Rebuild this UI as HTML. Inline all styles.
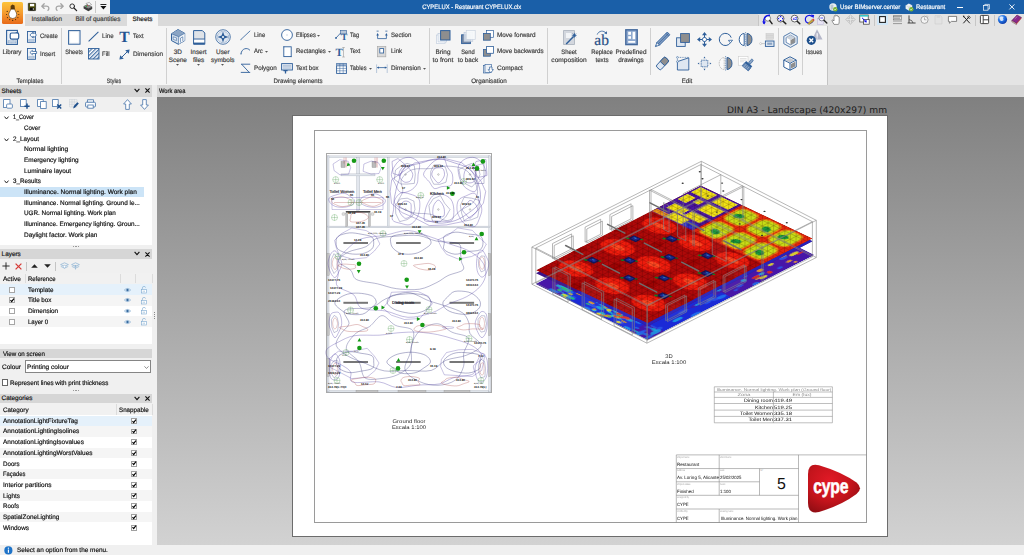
<!DOCTYPE html><html><head><meta charset="utf-8"><title>CYPELUX - Restaurant CYPELUX.clx</title><style>
*{box-sizing:border-box;margin:0;padding:0}
html,body{width:1024px;height:555px;overflow:hidden;background:#f0f0f0}
body{position:relative;font-family:"Liberation Sans",sans-serif;font-size:6.4px;color:#222;line-height:8px;text-rendering:geometricPrecision}
.a{position:absolute;white-space:nowrap}
.t{position:absolute;white-space:nowrap;line-height:8px;height:8px;-webkit-text-stroke:0.18px currentColor}
.c{text-align:center}
.rb{color:#3c3c3c}
.vs{position:absolute;width:1px;background:#cfcfcf}
svg{position:absolute;overflow:visible}
</style></head><body>
<div class="a" style="left:0px;top:0px;width:1024px;height:13.5px;background:#1a5fa8;"></div>
<div class="a" style="left:0px;top:0px;width:110px;height:13.5px;background:#f5f5f5;"></div>
<div class="a" style="left:0px;top:13.5px;width:1024px;height:12.5px;background:#dadada;"></div>
<div class="a" style="left:0px;top:13.5px;width:25px;height:12.5px;background:#f5f5f5;"></div>
<div class="a" style="left:758px;top:13.5px;width:266px;height:12.5px;background:#e4e4e4;"></div>
<div class="a" style="left:0px;top:26px;width:1024px;height:59px;background:#e4e4e4;"></div>
<div class="a" style="left:0px;top:26px;width:826.5px;height:58.5px;background:#f5f5f5;"></div>
<div class="a" style="left:826.5px;top:26px;width:0.8px;height:58.5px;background:#c4c4c4;"></div>
<div class="a" style="left:0px;top:85px;width:1024px;height:11.5px;background:#d6d6d6;"></div>
<div class="a" style="left:152px;top:85px;width:5px;height:11.5px;background:#ececec;"></div>
<div class="a" style="left:0px;top:96.5px;width:157px;height:449px;background:#f0f0f0;"></div>
<div class="a" style="left:157px;top:96.5px;width:867px;height:448.5px;background:linear-gradient(#808080,#d2d2d2);"></div>
<div class="a" style="left:0px;top:545px;width:1024px;height:10px;background:#f0f0f0;"></div>
<div class="a" style="left:1.6px;top:1.9px;width:21.5px;height:21.8px;border-radius:1.6px;background:linear-gradient(#fdc43c,#f6a030 45%,#e86a1a)"></div>
<svg style="left:1.6px;top:1.9px" width="21.5" height="21.8" viewBox="0 0 21.5 21.8">
<g fill="#3a2408"><circle cx="5.2" cy="9.4" r="0.55"/><circle cx="4.6" cy="12.5" r="0.55"/><circle cx="5.4" cy="15.6" r="0.55"/><circle cx="7.7" cy="17.6" r="0.55"/><circle cx="10.7" cy="18.4" r="0.55"/><circle cx="13.6" cy="17.6" r="0.55"/><circle cx="15.9" cy="15.6" r="0.55"/><circle cx="16.8" cy="12.5" r="0.55"/><circle cx="16" cy="9.4" r="0.55"/></g>
<path d="M8.6 7.4 L8.6 4 L10.4 2.4 L12.6 3.4 L12.9 7.4Z" fill="#5a3a0c"/>
<path d="M8.8 7.2 L12.7 7.2 C12.9 9 14.7 10 14.7 12.6 A3.95 3.95 0 0 1 6.8 12.6 C6.8 10 8.6 9 8.8 7.2Z" fill="#fff" stroke="#3a2408" stroke-width="0.55"/>
</svg>
<svg style="left:27.5px;top:3px" width="8" height="8" viewBox="0 0 8 8"><rect x="0.3" y="0.3" width="7.3" height="7.3" rx="0.4" fill="#55550a" stroke="#111" stroke-width="0.6"/><rect x="2" y="0.9" width="4.2" height="2.4" fill="#fff"/><rect x="1.8" y="4.6" width="4.6" height="2.8" fill="#0a0a0a"/><rect x="4.8" y="5.2" width="1" height="1.6" fill="#ddd"/></svg>
<svg style="left:41px;top:3px" width="10" height="8" viewBox="0 0 10 8" fill="none" stroke="#a4a4a4" stroke-width="1.3" stroke-linecap="round" stroke-linejoin="round"><path d="M3.2 0.8 L0.8 3.2 L3.2 5.4 M1 3.2 H5.5 C8 3.2 8.6 5.5 7 7.4"/></svg>
<svg style="left:55px;top:3px" width="10" height="8" viewBox="0 0 10 8" fill="none" stroke="#a4a4a4" stroke-width="1.3" stroke-linecap="round" stroke-linejoin="round"><path d="M5.8 0.8 L8.2 3.2 L5.8 5.4 M8 3.2 H3.5 C1 3.2 0.4 5.5 2 7.4"/></svg>
<svg style="left:69px;top:3px" width="9" height="9" viewBox="0 0 9 9" fill="none" stroke="#222" stroke-linecap="round"><circle cx="3.2" cy="3.2" r="2.3" stroke-width="0.9"/><line x1="5" y1="5" x2="7.6" y2="7.6" stroke-width="1.3"/></svg>
<svg style="left:82.5px;top:2px" width="10" height="10" viewBox="0 0 10 10"><path d="M3 1.5 L6.2 0.4 L8.6 2.6 L5.4 4Z" fill="#f4f4f4" stroke="#555" stroke-width="0.4"/><path d="M0.6 4.2 L4.2 2.6 L9.2 4.8 L9.2 7 L5.4 9.2 L0.6 6.6Z" fill="#3c3c3c"/><path d="M0.6 4.2 L4.2 2.6 L9.2 4.8 L5.4 6.6Z" fill="#8a8a8a"/><circle cx="3.4" cy="4.2" r="0.7" fill="#2fa63a"/><circle cx="4.6" cy="3.6" r="0.5" fill="#d33"/></svg>
<div class="a" style="left:95.2px;top:1px;width:0.6px;height:11.5px;background:#c8c8c8;"></div>
<svg style="left:100px;top:3.6px" width="7" height="6" viewBox="0 0 7 6"><rect x="0.4" y="0" width="6" height="0.9" fill="#111"/><path d="M0.4 2 H6.4 L3.4 5.4Z" fill="#111"/></svg>
<div class="t " style="left:418.20px;width:100px;text-align:center;top:3.70px;color:#fff;transform:scaleX(0.9156);transform-origin:50% 50%;">CYPELUX - Restaurant CYPELUX.clx</div>
<svg style="left:829px;top:2.5px" width="9" height="9" viewBox="0 0 9 9"><circle cx="4" cy="4" r="3.7" fill="#e9eef2"/><path d="M1.5 2 Q3.5 0.8 4.6 2.4 Q3.4 4.2 4.8 5.6 Q3.2 7.4 1.6 6.4Z" fill="#b9c6cf"/><circle cx="6.3" cy="6.3" r="2.2" fill="#79b531"/><path d="M5.2 6.3 L6 7.1 L7.4 5.5" stroke="#fff" stroke-width="0.6" fill="none"/></svg>
<div class="t " style="left:839.6px;top:3.70px;transform:scaleX(0.9487);transform-origin:0 50%;color:#fff">User BIMserver.center</div>
<svg style="left:904.5px;top:2.5px" width="9" height="9" viewBox="0 0 9 9"><path d="M0.6 2.4 L3.8 0.6 L7.2 2.2 L7.2 5.6 L3.8 7.6 L0.6 5.8Z" fill="#eef1f3"/><path d="M0.6 2.4 L3.8 4 L7.2 2.2 M3.8 4 V7.6" stroke="#b4bcc2" stroke-width="0.4" fill="none"/><circle cx="6.3" cy="6.3" r="2.2" fill="#79b531"/><path d="M5.2 6.3 L6 7.1 L7.4 5.5" stroke="#fff" stroke-width="0.6" fill="none"/></svg>
<div class="t " style="left:915.7px;top:3.70px;transform:scaleX(0.9327);transform-origin:0 50%;color:#fff">Restaurant</div>
<div class="a" style="left:957px;top:6.5px;width:6px;height:0.8px;background:#fff;"></div>
<svg style="left:982.5px;top:3.5px" width="7" height="7" viewBox="0 0 7 7" fill="none" stroke="#fff" stroke-width="0.7"><rect x="0.4" y="1.6" width="4.6" height="4.6"/><path d="M1.8 1.6 V0.4 H6.4 V5 H5"/></svg>
<svg style="left:1008.5px;top:4px" width="6" height="6" viewBox="0 0 6 6" stroke="#fff" stroke-width="0.9"><path d="M0.4 0.4 L5.4 5.4 M5.4 0.4 L0.4 5.4"/></svg>
<div class="a" style="left:127px;top:13.5px;width:31px;height:12.5px;background:#f5f5f5;"></div>
<div class="t rb" style="left:-3.30px;width:100px;text-align:center;top:15.50px;">Installation</div>
<div class="t rb" style="left:48.00px;width:100px;text-align:center;top:15.50px;">Bill of quantities</div>
<div class="t " style="left:92.50px;width:100px;text-align:center;top:15.50px;color:#111">Sheets</div>
<div class="a" style="left:758px;top:14.5px;width:0.7px;height:11px;background:#c6c6c6;"></div>
<svg style="left:762.30px;top:14.30px" width="11" height="11" viewBox="0 0 11 11"><circle cx="5.8" cy="4.4" r="2.8" fill="#fff" stroke="#666" stroke-width="0.8"/><path d="M7.8 6.6 L10 9.6" stroke="#222" stroke-width="1.5" stroke-linecap="round"/><path d="M2 9.8 C0.8 5 3 1 8 1.2" fill="none" stroke="#1414e6" stroke-width="1.5"/><path d="M0.2 7.6 L2.2 10.6 L4 7.4Z" fill="#1414e6"/></svg>
<svg style="left:776.00px;top:14.30px" width="11" height="11" viewBox="0 0 11 11"><circle cx="4.6" cy="4.6" r="3.4" fill="#fff" stroke="#555" stroke-width="0.9"/><path d="M7.2 7.2 L9.8 9.8" stroke="#222" stroke-width="1.5" stroke-linecap="round"/><g fill="#1414e6"><path d="M4.6 1.6 L5.8 3.2 H3.4Z M4.6 7.6 L5.8 6 H3.4Z M1.6 4.6 L3.2 3.4 V5.8Z M7.6 4.6 L6 3.4 V5.8Z"/></g></svg>
<svg style="left:789.50px;top:14.30px" width="11" height="11" viewBox="0 0 11 11"><circle cx="4.6" cy="4.6" r="3.4" fill="#fff" stroke="#555" stroke-width="0.9"/><path d="M7.2 7.2 L9.8 9.8" stroke="#222" stroke-width="1.5" stroke-linecap="round"/><text x="4.8" y="6.2" font-size="4.2" font-weight="bold" fill="#1414e6" text-anchor="middle" font-family="Liberation Sans, sans-serif">x2</text></svg>
<svg style="left:803.50px;top:14.30px" width="11" height="11" viewBox="0 0 11 11"><path d="M8.6 3 A4 4 0 1 0 9.2 6.4" fill="none" stroke="#1414e6" stroke-width="1.2"/><path d="M6.8 0.6 L10.2 1 L9.4 4.2Z" fill="#1414e6"/><path d="M3.6 9.6 L8.2 5.4 L9.8 7 L5.2 10.6Z" fill="#c8a63c" stroke="#6b5a1e" stroke-width="0.4"/><path d="M8.2 5.4 L9.2 4.6 L10.6 6 L9.8 7Z" fill="#d33"/></svg>
<svg style="left:817.30px;top:14.30px" width="11" height="11" viewBox="0 0 11 11"><rect x="0.6" y="4.4" width="5.6" height="6" fill="#e8e4f4" stroke="#b9b3d9" stroke-width="0.5"/><circle cx="4.8" cy="4" r="2.9" fill="#fff" fill-opacity="0.8" stroke="#667" stroke-width="0.8"/><path d="M3.4 4 H6.2" stroke="#1414e6" stroke-width="0.7"/><path d="M7 6.2 L9.8 9" stroke="#222" stroke-width="1.4" stroke-linecap="round"/></svg>
<svg style="left:831.40px;top:14.30px" width="11" height="11" viewBox="0 0 11 11"><path d="M3 10.4 L1 6.8 Q0.8 5.6 2 6 L3 7 V2.4 Q3.6 1.4 4.2 2.4 V1.4 Q4.9 0.4 5.6 1.4 V1.8 Q6.3 1 7 2 V3 Q7.7 2.4 8.2 3.2 V7.6 Q8.2 9.4 7.4 10.4Z" fill="#fff" stroke="#555" stroke-width="0.6"/></svg>
<svg style="left:845.00px;top:14.30px" width="11" height="11" viewBox="0 0 11 11"><path d="M5.5 0.6 L7.4 2.8 H6.4 V4.6 H8.2 V3.6 L10.4 5.5 L8.2 7.4 V6.4 H6.4 V8.2 H7.4 L5.5 10.4 L3.6 8.2 H4.6 V6.4 H2.8 V7.4 L0.6 5.5 L2.8 3.6 V4.6 H4.6 V2.8 H3.6Z" fill="#e6e6e6" stroke="#b0b0b0" stroke-width="0.6"/></svg>
<svg style="left:859.10px;top:14.30px" width="11" height="11" viewBox="0 0 11 11"><rect x="0.8" y="1" width="8.4" height="7" fill="#fff" stroke="#333" stroke-width="0.7"/><rect x="0.8" y="1" width="8.4" height="1.6" fill="#38c6c6"/><rect x="4.6" y="5.6" width="5.6" height="4.6" fill="#fff" stroke="#333" stroke-width="0.7"/><path d="M3 3.8 L6.8 7.4" stroke="#1414e6" stroke-width="1"/><path d="M7.8 8.4 L5 8 L7.4 5.6Z" fill="#1414e6"/></svg>
<div class="a" style="left:873.6px;top:14.5px;width:0.7px;height:11px;background:#c6c6c6;"></div>
<div class="a" style="left:877px;top:14.3px;width:11px;height:11.2px;background:#cfe6f7;"></div>
<svg style="left:877.00px;top:14.30px" width="11" height="11" viewBox="0 0 11 11"><rect x="2.6" y="2.6" width="5.8" height="5.8" fill="#fff" stroke="#222" stroke-width="1.1"/></svg>
<svg style="left:891.50px;top:14.30px" width="11" height="11" viewBox="0 0 11 11"><path d="M1 1.6 H10 M1 7 H10 M1 9.6 H10" stroke="#666" stroke-width="0.6"/><rect x="1.6" y="2.6" width="7.8" height="3.2" fill="#e4e4e4" stroke="#666" stroke-width="0.5"/><path d="M3 3.4 V5 M5 3.4 V5 M7 3.4 V5" stroke="#444" stroke-width="0.7"/></svg>
<svg style="left:905.50px;top:14.30px" width="11" height="11" viewBox="0 0 11 11"><path d="M3 1.4 V9 H9.6 M1.6 9 H3" fill="none" stroke="#333" stroke-width="0.9"/><path d="M3 5.6 Q6.4 5.8 7 9" fill="none" stroke="#333" stroke-width="0.7"/></svg>
<svg style="left:919.30px;top:14.30px" width="11" height="11" viewBox="0 0 11 11"><circle cx="5.5" cy="5.8" r="3.6" fill="#f4f4f4" stroke="#888" stroke-width="0.7"/><path d="M5.5 3.4 V5.8 H7.4" fill="none" stroke="#888" stroke-width="0.6"/><path d="M8 1.6 L9 2.6" stroke="#888" stroke-width="0.6"/></svg>
<svg style="left:933.20px;top:14.30px" width="11" height="11" viewBox="0 0 11 11"><path d="M2 1.6 H7.6 L9 3 V10 H2Z" fill="#e2e2e2" stroke="#cfcfcf" stroke-width="0.6"/><rect x="3.6" y="1.6" width="3.6" height="2.2" fill="#d6d6d6"/></svg>
<svg style="left:946.90px;top:14.30px" width="11" height="11" viewBox="0 0 11 11"><path d="M1.4 2.4 H9.6 V7.4 H4.4 L2.4 9.2 V7.4 H1.4Z" fill="#fff" stroke="#555" stroke-width="0.7"/></svg>
<svg style="left:960.90px;top:14.30px" width="11" height="11" viewBox="0 0 11 11"><path d="M2.8 2.6 L8.6 9 M8.4 2.4 L2.6 9" stroke="#222" stroke-width="1" stroke-linecap="round"/><path d="M1.8 1.6 L3.8 2 L2.4 3.6Z" fill="#222"/><path d="M7.6 1.6 A1.4 1.4 0 1 0 9.6 3.4" fill="none" stroke="#222" stroke-width="0.8"/></svg>
<div class="a" style="left:975.2px;top:14.5px;width:0.7px;height:11px;background:#c6c6c6;"></div>
<svg style="left:978.60px;top:14.30px" width="11" height="11" viewBox="0 0 11 11"><rect x="1.4" y="1.4" width="8.2" height="8.2" rx="0.8" fill="#fff" stroke="#333" stroke-width="0.9"/><path d="M4.2 1.4 V9.6 M4.2 5.8 H9.6" stroke="#333" stroke-width="0.9"/></svg>
<div class="a" style="left:994.3px;top:14.5px;width:0.7px;height:11px;background:#c6c6c6;"></div>
<svg style="left:996.80px;top:14.30px" width="11" height="11" viewBox="0 0 11 11"><defs><radialGradient id="gl" cx="0.35" cy="0.3" r="0.8"><stop offset="0" stop-color="#9cc8ff"/><stop offset="0.5" stop-color="#1f6fe0"/><stop offset="1" stop-color="#0a2f9a"/></radialGradient></defs><circle cx="5.5" cy="5.5" r="4.6" fill="url(#gl)"/><path d="M2.4 3.6 Q4.4 2 6.4 3 Q5.4 4.6 6.6 6 Q5 7.6 3.4 6.4Z" fill="#e8f2ff" opacity="0.85"/></svg>
<svg style="left:1010.90px;top:14.30px" width="11" height="11" viewBox="0 0 11 11"><path d="M0.8 6.6 L6 1 L10.4 3.4 L5.4 9.4Z" fill="#8a2a8a" stroke="#4a124a" stroke-width="0.5"/><path d="M0.8 6.6 L5.4 9.4 L5.4 10.6 L0.8 7.8Z" fill="#e8d9a8" stroke="#4a124a" stroke-width="0.4"/><path d="M5.4 9.4 L10.4 3.4 V4.6 L5.4 10.6Z" fill="#c23a3a"/><path d="M3.6 5 L6.4 2.4" stroke="#e0b0e0" stroke-width="0.5"/></svg>
<svg style="left:6px;top:30px" width="13.5" height="15" viewBox="0 0 13.5 15" ><rect x="0.6" y="0.4" width="10.8" height="14" fill="#eef2f7" stroke="#2f5f9a" stroke-width="1.1"/><rect x="2" y="10.7" width="8" height="2.2" fill="#c9d6e6" stroke="#2f5f9a" stroke-width="0.4" stroke-dasharray="0.8 0.5"/><path d="M9.6 2.2 H11.6 Q12.8 2.2 12.8 3.4 V4.4 H9.6Z" fill="#2f5f9a"/><rect x="4.2" y="3" width="8.5" height="6.2" rx="1.6" fill="#fff" stroke="#2f5f9a" stroke-width="1.2"/></svg>
<div class="t rb" style="left:-38.40px;width:100px;text-align:center;top:48.70px;;transform:scaleX(0.9712);transform-origin:50% 50%;">Library</div>
<svg style="left:27px;top:30.5px" width="10" height="12" viewBox="0 0 10 12" ><rect x="0.5" y="0.5" width="8" height="10.8" fill="#eef2f7" stroke="#2f5f9a" stroke-width="0.9"/><rect x="1.7" y="8.4" width="5.6" height="1.7" fill="#c9d6e6" stroke="#2f5f9a" stroke-width="0.35" stroke-dasharray="0.7 0.4"/><path d="M2.9 4 L5.6 1.3 V2.6 H6.6 V1.3 L9.6 4 L6.6 6.8 V5.4 H5.6 V6.8Z" fill="#fff" stroke="#2f5f9a" stroke-width="0.75" stroke-linejoin="round"/></svg>
<div class="t rb" style="left:40.2px;top:33.10px;transform:scaleX(0.9266);transform-origin:0 50%;">Create</div>
<svg style="left:27px;top:48px" width="10" height="12" viewBox="0 0 10 12" ><rect x="0.5" y="0.5" width="8" height="10.8" fill="#eef2f7" stroke="#2f5f9a" stroke-width="0.9"/><rect x="1.7" y="8.4" width="5.6" height="1.7" fill="#c9d6e6" stroke="#2f5f9a" stroke-width="0.35" stroke-dasharray="0.7 0.4"/><path d="M2.9 4.5 L5.4 2.3 V3.5 H9.6 V5.5 H5.4 V6.7Z" fill="#fff" stroke="#2f5f9a" stroke-width="0.75" stroke-linejoin="round"/></svg>
<div class="t rb" style="left:40.2px;top:51.00px;transform:scaleX(0.9434);transform-origin:0 50%;">Insert</div>
<div class="t rb" style="left:-20.00px;width:100px;text-align:center;top:77.60px;;transform:scaleX(0.9256);transform-origin:50% 50%;">Templates</div>
<div class="a" style="left:61.2px;top:28px;width:0.8px;height:56px;background:#d0d0d0;"></div>
<svg style="left:68px;top:30px" width="13" height="15" viewBox="0 0 13 15" ><rect x="0.6" y="0.6" width="11.4" height="13.6" fill="#fff" stroke="#2f5f9a" stroke-width="1"/><rect x="1.6" y="1.6" width="9.4" height="11.6" fill="none" stroke="#b9c7d9" stroke-width="0.6" stroke-dasharray="0.6 0.5"/></svg>
<div class="t rb" style="left:23.90px;width:100px;text-align:center;top:48.70px;;transform:scaleX(0.8883);transform-origin:50% 50%;">Sheets</div>
<svg style="left:88px;top:30.5px" width="11" height="11" viewBox="0 0 11 11" ><line x1="0.6" y1="10.4" x2="10.4" y2="0.8" stroke="#2f5f9a" stroke-width="1.05"/></svg>
<div class="t rb" style="left:102px;top:33.10px;transform:scaleX(0.9586);transform-origin:0 50%;">Line</div>
<svg style="left:119px;top:30.5px" width="10" height="11" viewBox="0 0 10 11" ></svg>
<div class="a" style="left:118.8px;top:31.1px;width:11px;height:14px;font-family:'Liberation Serif',serif;font-weight:bold;font-size:15.5px;line-height:14px;color:#1f5290;text-align:center">T</div>
<div class="t rb" style="left:132.5px;top:33.10px;transform:scaleX(0.8946);transform-origin:0 50%;">Text</div>
<svg style="left:87.7px;top:48.2px" width="11.5" height="11.5" viewBox="0 0 11.5 11.5" ><defs><pattern id="hat" width="2.7" height="2.7" patternUnits="userSpaceOnUse" patternTransform="rotate(-45)"><rect width="2.7" height="1.25" fill="#2f5f9a"/></pattern></defs><rect x="0.5" y="0.5" width="10.5" height="10.5" fill="#fff"/><rect x="0.5" y="0.5" width="10.5" height="10.5" fill="url(#hat)" opacity="0.85"/><rect x="0.5" y="0.5" width="10.5" height="10.5" fill="none" stroke="#2f5f9a" stroke-width="0.9"/></svg>
<div class="t rb" style="left:102px;top:51.00px;transform:scaleX(0.9296);transform-origin:0 50%;">Fill</div>
<svg style="left:119px;top:48.6px" width="11" height="11" viewBox="0 0 11 11" ><line x1="1.6" y1="9.4" x2="9.4" y2="1.6" stroke="#2f5f9a" stroke-width="1"/><path d="M10.6 0.4 L6.2 1.2 L9.8 4.8Z M0.4 10.6 L4.8 9.8 L1.2 6.2Z" fill="#2f5f9a"/></svg>
<div class="t rb" style="left:132.5px;top:51.00px;transform:scaleX(0.9922);transform-origin:0 50%;">Dimension</div>
<div class="t rb" style="left:63.80px;width:100px;text-align:center;top:77.60px;;transform:scaleX(0.8262);transform-origin:50% 50%;">Styles</div>
<div class="a" style="left:166.2px;top:28px;width:0.8px;height:56px;background:#d0d0d0;"></div>
<svg style="left:171px;top:29.4px" width="14.2" height="15.8" viewBox="0 0 14.2 15.8" ><path d="M7 0.5 L13.7 4.3 V11.6 L7.4 15.3 L0.5 11.6 V4.8Z" fill="#d3deeb" stroke="#2f5f9a" stroke-width="1"/><path d="M7 0.5 L13.7 4.3 L7.8 7.7 L0.5 4.8Z" fill="#8aa4c4"/><path d="M7.8 7.7 L13.7 4.3 V11.6 L7.4 15.3Z" fill="#f4f7fa"/><path d="M0.5 4.8 L7.8 7.7 L7.4 15.3 M7.8 7.7 L13.7 4.3" fill="none" stroke="#2f5f9a" stroke-width="0.6"/><path d="M9.6 13.6 V9 L11.8 7.8 V12.4" fill="#fff" stroke="#2f5f9a" stroke-width="0.6"/><rect x="2.2" y="8.2" width="3.4" height="2.6" fill="#e9eff6" stroke="#2f5f9a" stroke-width="0.5" transform="skewY(18) translate(0 -1.1)"/></svg>
<div class="t rb" style="left:127.80px;width:100px;text-align:center;top:48.70px;">3D</div>
<div class="t rb" style="left:127.80px;width:100px;text-align:center;top:56.80px;">Scene</div>
<svg style="left:176.3px;top:64.2px" width="3" height="1.8" viewBox="0 0 3 1.8"><path d="M0 0H3L1.5 1.8Z" fill="#555"/></svg>
<svg style="left:193px;top:30px" width="12.5" height="15" viewBox="0 0 12.5 15" ><path d="M0.6 0.6 H9.4 L11.8 3 V14.3 H0.6Z" fill="#dfe3e8" stroke="#2f5f9a" stroke-width="1"/><rect x="1.2" y="9.4" width="10" height="3.4" fill="#fff"/><path d="M0.6 9 H11.8" stroke="#2f5f9a" stroke-width="0.9"/><path d="M0.6 13.3 H11.8" stroke="#2f5f9a" stroke-width="1.4"/></svg>
<div class="t rb" style="left:148.60px;width:100px;text-align:center;top:48.70px;">Insert</div>
<div class="t rb" style="left:148.60px;width:100px;text-align:center;top:56.80px;">files</div>
<svg style="left:197.1px;top:64.2px" width="3" height="1.8" viewBox="0 0 3 1.8"><path d="M0 0H3L1.5 1.8Z" fill="#555"/></svg>
<svg style="left:214.8px;top:29.3px" width="16" height="16" viewBox="0 0 16 16" ><circle cx="8" cy="8" r="7.3" fill="#eef2f7" stroke="#2f5f9a" stroke-width="0.8"/><circle cx="8" cy="8" r="5.6" fill="#dfe7f1" stroke="#2f5f9a" stroke-width="0.5" stroke-dasharray="0.8 0.6"/><path d="M8 2.4 L9.4 6.6 L13.6 8 L9.4 9.4 L8 13.6 L6.6 9.4 L2.4 8 L6.6 6.6Z" fill="#2f5f9a"/><circle cx="8" cy="8" r="1" fill="#fff"/></svg>
<div class="t rb" style="left:172.80px;width:100px;text-align:center;top:48.70px;">User</div>
<div class="t rb" style="left:172.80px;width:100px;text-align:center;top:56.80px;">symbols</div>
<svg style="left:221.3px;top:64.2px" width="3" height="1.8" viewBox="0 0 3 1.8"><path d="M0 0H3L1.5 1.8Z" fill="#555"/></svg>
<svg style="left:239.6px;top:30px" width="11" height="10.5" viewBox="0 0 11 10.5" ><line x1="0.8" y1="9.6" x2="10.2" y2="0.8" stroke="#2f5f9a" stroke-width="0.8"/><circle cx="0.9" cy="9.6" r="0.7" fill="#2f5f9a" opacity="0.5"/></svg>
<div class="t rb" style="left:253.8px;top:32.00px;transform:scaleX(0.9256);transform-origin:0 50%;">Line</div>
<svg style="left:239.6px;top:47px" width="11" height="8" viewBox="0 0 11 8" ><path d="M1 7 C1.4 1.4 7.4 0 10 3.4" fill="none" stroke="#2f5f9a" stroke-width="0.9"/><circle cx="1" cy="7" r="0.8" fill="#2f5f9a" opacity="0.5"/></svg>
<div class="t rb" style="left:253.8px;top:47.80px;transform:scaleX(0.9166);transform-origin:0 50%;">Arc</div>
<svg style="left:264.8px;top:50.7px" width="3" height="1.8" viewBox="0 0 3 1.8"><path d="M0 0H3L1.5 1.8Z" fill="#555"/></svg>
<svg style="left:239.6px;top:63.2px" width="11" height="10.5" viewBox="0 0 11 10.5" ><path d="M10.2 1.2 H1 M1.6 1.2 L9.2 9.4 M10.2 9.4 H0.8" fill="none" stroke="#2f5f9a" stroke-width="0.9"/></svg>
<div class="t rb" style="left:253.8px;top:65.00px;transform:scaleX(0.9858);transform-origin:0 50%;">Polygon</div>
<svg style="left:281px;top:29.3px" width="12" height="12" viewBox="0 0 12 12" ><circle cx="6" cy="6" r="5.4" fill="#fff" stroke="#2f5f9a" stroke-width="0.9"/><circle cx="6" cy="6" r="0.7" fill="#b9c7d9"/></svg>
<div class="t rb" style="left:296px;top:32.00px;transform:scaleX(0.8978);transform-origin:0 50%;">Ellipses</div>
<svg style="left:317.2px;top:34.900000000000006px" width="3" height="1.8" viewBox="0 0 3 1.8"><path d="M0 0H3L1.5 1.8Z" fill="#555"/></svg>
<svg style="left:282.6px;top:46px" width="9" height="11.5" viewBox="0 0 9 11.5" ><rect x="0.8" y="0.8" width="7.4" height="9.8" fill="#fff" stroke="#2f5f9a" stroke-width="0.9"/><circle cx="0.8" cy="0.8" r="0.7" fill="#2f5f9a" opacity="0.5"/><circle cx="8.2" cy="10.6" r="0.7" fill="#2f5f9a" opacity="0.5"/></svg>
<div class="t rb" style="left:296px;top:47.80px;transform:scaleX(0.9338);transform-origin:0 50%;">Rectangles</div>
<svg style="left:327.5px;top:50.7px" width="3" height="1.8" viewBox="0 0 3 1.8"><path d="M0 0H3L1.5 1.8Z" fill="#555"/></svg>
<svg style="left:281px;top:63px" width="12" height="11" viewBox="0 0 12 11" ><rect x="0.6" y="0.6" width="10.8" height="6.4" fill="#dfe7f1" stroke="#2f5f9a" stroke-width="0.9"/><path d="M2 2.4 H10 M2 3.8 H10 M2 5.2 H10" stroke="#8aa3c3" stroke-width="0.5"/><path d="M2.4 7.6 H6.6 M4.5 7.6 V10.6" stroke="#2f5f9a" stroke-width="1.3"/></svg>
<div class="t rb" style="left:296px;top:65.00px;transform:scaleX(0.9524);transform-origin:0 50%;">Text box</div>
<svg style="left:335px;top:29.5px" width="12" height="11.5" viewBox="0 0 12 11.5" ><rect x="5.6" y="0.5" width="5.8" height="3.6" fill="#b9c7d9" stroke="#2f5f9a" stroke-width="0.6"/><path d="M1 8 L5.6 3" stroke="#2f5f9a" stroke-width="0.8"/><circle cx="1" cy="8" r="0.9" fill="#2f5f9a"/></svg>
<div class="a" style="left:339.6px;top:34.4px;width:9px;height:9px;font-family:'Liberation Serif',serif;font-weight:bold;font-size:9.5px;line-height:9px;color:#2f5f9a;text-align:center">T</div>
<div class="t rb" style="left:350px;top:32.00px;transform:scaleX(0.8819);transform-origin:0 50%;">Tag</div>
<div class="a" style="left:334.6px;top:49.2px;width:9px;height:9px;font-family:'Liberation Serif',serif;font-weight:bold;font-size:11px;line-height:9px;color:#2f5f9a;text-align:center">T</div>
<svg style="left:342.4px;top:46.6px" width="3" height="10.5" viewBox="0 0 3 10.5" ><path d="M0.2 0.5 H2.8 M1.5 0.5 V10 M0.2 10 H2.8" stroke="#999" stroke-width="0.6" fill="none"/></svg>
<div class="t rb" style="left:350px;top:47.80px;transform:scaleX(0.8860);transform-origin:0 50%;">Text</div>
<svg style="left:335.6px;top:63px" width="11" height="11" viewBox="0 0 11 11" ><rect x="0.6" y="0.6" width="9.8" height="9.8" fill="#fff" stroke="#2f5f9a" stroke-width="0.9"/><rect x="0.6" y="0.6" width="9.8" height="2.4" fill="#9db3cf"/><path d="M0.6 3 H10.4 M0.6 5.4 H10.4 M0.6 7.8 H10.4 M3.8 0.6 V10.4 M7.2 0.6 V10.4" stroke="#2f5f9a" stroke-width="0.5"/></svg>
<div class="t rb" style="left:350px;top:65.00px;transform:scaleX(0.8919);transform-origin:0 50%;">Tables</div>
<svg style="left:368.5px;top:67.9px" width="3" height="1.8" viewBox="0 0 3 1.8"><path d="M0 0H3L1.5 1.8Z" fill="#555"/></svg>
<svg style="left:376px;top:30.2px" width="12" height="10" viewBox="0 0 12 10" ><path d="M1.6 4 V8.6 H10.4 V4" fill="none" stroke="#2f5f9a" stroke-width="0.8"/><path d="M0.3 5.4 L1.6 3 L2.9 5.4Z M9.1 5.4 L10.4 3 L11.7 5.4Z" fill="#2f5f9a"/><path d="M1 0.4 V2 M2.2 0.4 V2 M1 1.2 H2.2 M9.8 0.4 V2 M11 0.4 V2 M9.8 1.2 H11" stroke="#2f5f9a" stroke-width="0.4" fill="none"/></svg>
<div class="t rb" style="left:390.6px;top:32.00px;transform:scaleX(0.9556);transform-origin:0 50%;">Section</div>
<svg style="left:377.4px;top:46px" width="9.5" height="11.5" viewBox="0 0 9.5 11.5" ><rect x="0.6" y="0.6" width="8.2" height="10.2" fill="#d9d9d9" stroke="#a9a9a9" stroke-width="0.7"/><rect x="2.8" y="2.6" width="3.8" height="4.4" fill="#fff" stroke="#2f5f9a" stroke-width="0.8"/></svg>
<div class="t rb" style="left:390.6px;top:47.80px;transform:scaleX(0.9454);transform-origin:0 50%;">Link</div>
<svg style="left:376px;top:63.6px" width="12" height="9.5" viewBox="0 0 12 9.5" ><path d="M0.6 0.4 V9 M11.2 0.4 V9" stroke="#9db3cf" stroke-width="0.7"/><path d="M1.4 3.6 H10.4" stroke="#2f5f9a" stroke-width="0.8"/><path d="M0.9 3.6 L3 2.4 V4.8Z M10.9 3.6 L8.8 2.4 V4.8Z" fill="#2f5f9a"/></svg>
<div class="t rb" style="left:390.6px;top:65.00px;transform:scaleX(0.9889);transform-origin:0 50%;">Dimension</div>
<svg style="left:422.5px;top:67.9px" width="3" height="1.8" viewBox="0 0 3 1.8"><path d="M0 0H3L1.5 1.8Z" fill="#555"/></svg>
<div class="t rb" style="left:247.50px;width:100px;text-align:center;top:77.60px;;transform:scaleX(0.9566);transform-origin:50% 50%;">Drawing elements</div>
<div class="a" style="left:429px;top:28px;width:0.8px;height:56px;background:#d0d0d0;"></div>
<svg style="left:436px;top:30px" width="15" height="14.5" viewBox="0 0 15 14.5" ><rect x="0.5" y="5" width="8.6" height="8.6" fill="#fff" stroke="#b9c7d9" stroke-width="0.6"/><rect x="2" y="3.4" width="8.6" height="8.6" fill="#eef2f7" stroke="#b9c7d9" stroke-width="0.6"/><rect x="4.6" y="0.6" width="9.4" height="9.4" fill="#8e8e8e" stroke="#2f5f9a" stroke-width="1"/></svg>
<div class="t rb" style="left:393.20px;width:100px;text-align:center;top:48.70px;;transform:scaleX(1.0039);transform-origin:50% 50%;">Bring</div>
<div class="t rb" style="left:393.20px;width:100px;text-align:center;top:56.80px;;transform:scaleX(1.0541);transform-origin:50% 50%;">to front</div>
<svg style="left:460.8px;top:30px" width="15" height="14.5" viewBox="0 0 15 14.5" ><rect x="0.6" y="4.8" width="8.8" height="8.8" fill="#6f84a3" stroke="#2f5f9a" stroke-width="0.9"/><rect x="3" y="2.6" width="8.8" height="8.8" fill="#dde3ec" fill-opacity="0.85" stroke="#b9c7d9" stroke-width="0.6"/><rect x="5.2" y="0.5" width="9" height="9" fill="#f7f9fb" fill-opacity="0.9" stroke="#c3cedc" stroke-width="0.6"/></svg>
<div class="t rb" style="left:417.90px;width:100px;text-align:center;top:48.70px;;transform:scaleX(0.9032);transform-origin:50% 50%;">Send</div>
<div class="t rb" style="left:417.90px;width:100px;text-align:center;top:56.80px;;transform:scaleX(0.9838);transform-origin:50% 50%;">to back</div>
<svg style="left:483.3px;top:30px" width="11" height="11" viewBox="0 0 11 11" ><rect x="3.6" y="0.5" width="6.8" height="6.8" fill="#fff" stroke="#2f5f9a" stroke-width="0.7"/><rect x="0.5" y="3.4" width="6.8" height="6.8" fill="#8e8e8e" stroke="#2f5f9a" stroke-width="0.8"/></svg>
<div class="t rb" style="left:497.4px;top:32.00px;transform:scaleX(0.9956);transform-origin:0 50%;">Move forward</div>
<svg style="left:483.3px;top:46.4px" width="11" height="11" viewBox="0 0 11 11" ><rect x="0.5" y="3.4" width="6.8" height="6.8" fill="#8e8e8e" stroke="#2f5f9a" stroke-width="0.8"/><rect x="3.6" y="0.5" width="6.8" height="6.8" fill="#fff" stroke="#2f5f9a" stroke-width="0.8"/></svg>
<div class="t rb" style="left:497.4px;top:47.80px;transform:scaleX(0.9704);transform-origin:0 50%;">Move backwards</div>
<svg style="left:483.3px;top:63px" width="11.5" height="11" viewBox="0 0 11.5 11" ><rect x="0.5" y="2.6" width="6" height="7.4" fill="#dfe7f1" stroke="#2f5f9a" stroke-width="0.6"/><rect x="2" y="1.4" width="6.6" height="8" fill="#eef2f7" stroke="#2f5f9a" stroke-width="0.6"/><path d="M6.6 4 H9 V6.6 H10.4 L7.8 9.8 L5.2 6.6 H6.6Z" fill="#fff" stroke="#2f5f9a" stroke-width="0.7"/></svg>
<div class="t rb" style="left:497.4px;top:65.00px;transform:scaleX(1.0074);transform-origin:0 50%;">Compact</div>
<div class="t rb" style="left:438.70px;width:100px;text-align:center;top:77.60px;;transform:scaleX(0.9838);transform-origin:50% 50%;">Organisation</div>
<div class="a" style="left:547.4px;top:28px;width:0.8px;height:56px;background:#d0d0d0;"></div>
<svg style="left:563.3px;top:30px" width="14.5" height="15" viewBox="0 0 14.5 15" ><rect x="0.6" y="0.6" width="10.8" height="13.8" fill="#d3d7de" stroke="#a8b0bb" stroke-width="0.8"/><rect x="3" y="3" width="5.4" height="5" fill="#f2f4f7"/><path d="M3.2 14 L10.6 6.4" stroke="#2f5f9a" stroke-width="1.4"/><path d="M11.4 2.6 L12.1 4.6 L14.1 5.3 L12.1 6 L11.4 8 L10.7 6 L8.7 5.3 L10.7 4.6Z" fill="#2f5f9a"/><path d="M9.6 3.4 L13.2 7.2 M13.2 3.4 L9.6 7.2" stroke="#2f5f9a" stroke-width="0.5"/></svg>
<div class="t rb" style="left:519.40px;width:100px;text-align:center;top:48.70px;;transform:scaleX(0.9327);transform-origin:50% 50%;">Sheet</div>
<div class="t rb" style="left:519.40px;width:100px;text-align:center;top:56.80px;;transform:scaleX(1.0336);transform-origin:50% 50%;">composition</div>
<div class="a" style="left:593.3px;top:34.4px;width:17px;height:13px;font-family:'Liberation Serif',serif;font-size:15.5px;line-height:13px;color:#274f86;-webkit-text-stroke:0.2px #274f86;text-align:center;letter-spacing:0.2px">ab</div>
<svg style="left:596px;top:30.2px" width="12" height="5" viewBox="0 0 12 5" ><path d="M1.2 4.6 C2.6 0.4 8 0.2 10 3.2" fill="none" stroke="#2f5f9a" stroke-width="0.8"/><path d="M11 1.2 L10.8 4.2 L8.2 3.2Z" fill="#2f5f9a"/></svg>
<div class="t rb" style="left:551.70px;width:100px;text-align:center;top:48.70px;;transform:scaleX(0.9199);transform-origin:50% 50%;">Replace</div>
<div class="t rb" style="left:551.70px;width:100px;text-align:center;top:56.80px;;transform:scaleX(0.9767);transform-origin:50% 50%;">texts</div>
<svg style="left:625px;top:29.2px" width="13" height="16.4" viewBox="0 0 13 16.4" ><rect x="0.8" y="0.8" width="11.4" height="14.8" fill="#8ea9cf" stroke="#44699c" stroke-width="1.4"/><rect x="3.2" y="2.8" width="2.8" height="3" fill="#fff"/><rect x="3.2" y="7.2" width="2.8" height="2.6" fill="#fff"/><rect x="7.6" y="2.8" width="2.6" height="7.4" fill="#fff"/><rect x="3.2" y="12" width="7" height="1.8" fill="#fff"/></svg>
<div class="t rb" style="left:581.40px;width:100px;text-align:center;top:48.70px;;transform:scaleX(1.0014);transform-origin:50% 50%;">Predefined</div>
<div class="t rb" style="left:581.40px;width:100px;text-align:center;top:56.80px;;transform:scaleX(0.9956);transform-origin:50% 50%;">drawings</div>
<div class="a" style="left:650.2px;top:28px;width:0.8px;height:47px;background:#d0d0d0;"></div>
<svg style="left:654.9px;top:32.3px" width="15" height="15" viewBox="0 0 15 15" ><path d="M1.86 10.46 L12.26 0.06 L14.94 2.74 L4.54 13.14Z" fill="#7d99bf" stroke="#2f5f9a" stroke-width="0.8" stroke-linejoin="round"/><path d="M3.2 11.8 L13.6 1.4" stroke="#2f5f9a" stroke-width="0.6"/><path d="M11 1.3 L13.7 4" stroke="#2f5f9a" stroke-width="0.7"/><path d="M1.86 10.46 L0.4 14.6 L4.54 13.14Z" fill="#eef2f7" stroke="#2f5f9a" stroke-width="0.8" stroke-linejoin="round"/><path d="M0.4 14.6 L0.95 13 L2 14.05Z" fill="#2f5f9a"/></svg>
<svg style="left:676.0px;top:32.8px" width="14" height="14" viewBox="0 0 14 14" ><rect x="0.6" y="4.8" width="8.6" height="8.6" fill="#dfe7f1" stroke="#2f5f9a" stroke-width="0.9"/><rect x="4.6" y="0.6" width="8.8" height="8.8" fill="#8e8e8e" stroke="#2f5f9a" stroke-width="0.9"/></svg>
<svg style="left:696.7px;top:32.3px" width="15" height="15" viewBox="0 0 15 15" ><g fill="#2f5f9a"><path d="M7.5 0 L10 3.2 H5Z M7.5 15 L10 11.8 H5Z M0 7.5 L3.2 5 V10Z M15 7.5 L11.8 5 V10Z"/></g><path d="M7.5 3 V12 M3 7.5 H12" stroke="#2f5f9a" stroke-width="1"/><circle cx="7.5" cy="7.5" r="2.1" fill="#fff" stroke="#2f5f9a" stroke-width="0.9"/></svg>
<svg style="left:717.5px;top:32.3px" width="15" height="15" viewBox="0 0 15 15" ><path d="M12.6 10.6 A6.1 6.1 0 1 1 13.2 5.6" fill="none" stroke="#2f5f9a" stroke-width="1"/><path d="M14.6 8.2 L12.4 10.8 L10.4 8.4Z" fill="#fff" stroke="#2f5f9a" stroke-width="0.8" stroke-linejoin="round"/></svg>
<svg style="left:738.2px;top:32.3px" width="15" height="15" viewBox="0 0 15 15" ><path d="M6.2 1.5 A5 6 0 0 0 6.2 13.5Z" fill="#fff" stroke="#2f5f9a" stroke-width="1"/><path d="M9 1.5 A5 6 0 0 1 9 13.5Z" fill="#8e8e8e" stroke="#2f5f9a" stroke-width="1"/><path d="M7.6 0 V15" stroke="#2f5f9a" stroke-width="0.6" stroke-dasharray="1.1 0.7"/></svg>
<svg style="left:759.0px;top:32.8px" width="16" height="14" viewBox="0 0 16 14" ><rect x="7" y="0.6" width="7.4" height="5.6" fill="#dcdcdc" stroke="#c4c4c4" stroke-width="0.5"/><path d="M7 2.4 H14.4 M7 4.2 H14.4" stroke="#c9c9c9" stroke-width="0.5"/><rect x="6.4" y="8" width="8.6" height="5.4" fill="#dfe7f1" stroke="#2f5f9a" stroke-width="0.9"/><rect x="8.2" y="9.6" width="5" height="2.2" fill="#8aa3c3"/><path d="M2.4 10.6 H6.4" stroke="#aaa" stroke-width="0.6"/><circle cx="1.6" cy="10.6" r="1" fill="#fff" stroke="#aaa" stroke-width="0.5"/></svg>
<svg style="left:654.9px;top:55.9px" width="15" height="15" viewBox="0 0 15 15" ><g transform="rotate(-47 7.5 7.5)"><rect x="1" y="4.4" width="13" height="6.2" rx="1.6" fill="#dfe7f1" stroke="#2f5f9a" stroke-width="0.9"/><path d="M7.4 4.4 H12.4 Q14 4.4 14 6 V9 Q14 10.6 12.4 10.6 H7.4Z" fill="#8e8e8e" stroke="#2f5f9a" stroke-width="0.9"/></g></svg>
<svg style="left:676.0px;top:55.9px" width="14" height="15" viewBox="0 0 14 15" ><path d="M1.4 14 V5.6 L12.8 1.8 V14Z" fill="#dfe7f1" stroke="#2f5f9a" stroke-width="0.9"/><path d="M1.4 5.6 V1.4 H12.8" fill="none" stroke="#2f5f9a" stroke-width="0.6" stroke-dasharray="1 0.7"/><circle cx="1.4" cy="1.4" r="0.9" fill="#fff" stroke="#2f5f9a" stroke-width="0.5"/><circle cx="1.4" cy="5.6" r="0.9" fill="#fff" stroke="#2f5f9a" stroke-width="0.5"/></svg>
<svg style="left:696.7px;top:55.9px" width="15" height="15" viewBox="0 0 15 15" ><rect x="4.2" y="4.2" width="6.6" height="6.6" fill="#dfe7f1" stroke="#2f5f9a" stroke-width="0.9" stroke-dasharray="1.3 0.9"/><g fill="#2f5f9a"><path d="M7.5 0.6 L8.5 2.2 H6.5Z M7.5 14.4 L8.5 12.8 H6.5Z M0.6 7.5 L2.2 6.5 V8.5Z M14.4 7.5 L12.8 6.5 V8.5Z"/></g></svg>
<svg style="left:717.5px;top:55.9px" width="15" height="15" viewBox="0 0 15 15" ><path d="M6.2 1.5 A5 6 0 0 0 6.2 13.5Z" fill="#fafafa" stroke="#8a8a8a" stroke-width="0.6" stroke-dasharray="1 0.7"/><path d="M9 1.5 A5 6 0 0 1 9 13.5Z" fill="#8e8e8e" stroke="#2f5f9a" stroke-width="1"/><path d="M7.6 0 V15" stroke="#2f5f9a" stroke-width="0.6" stroke-dasharray="1.1 0.7"/></svg>
<svg style="left:737.7px;top:55.9px" width="16" height="15" viewBox="0 0 16 15" ><rect x="0.6" y="0.6" width="9.4" height="8.6" fill="#fff" stroke="#c8c8c8" stroke-width="0.5"/><path d="M2 2.6 H8.6 M2 4.2 H8.6 M2 5.8 H6" stroke="#c4c4c4" stroke-width="0.5"/><g transform="rotate(40 9.5 9.5)"><rect x="8.4" y="1.6" width="2.4" height="5.4" rx="1" fill="#8aa3c3" stroke="#2f5f9a" stroke-width="0.6"/><rect x="5.6" y="7" width="8" height="2.2" fill="#2f5f9a"/><path d="M5.6 9.2 H13.6 V13.2 H5.6Z" fill="#5f82b0" stroke="#2f5f9a" stroke-width="0.6"/><path d="M7.6 9.4 V13 M9.6 9.4 V13 M11.6 9.4 V13" stroke="#dfe7f1" stroke-width="0.4"/></g></svg>
<div class="t rb" style="left:637.00px;width:100px;text-align:center;top:77.60px;;transform:scaleX(0.9521);transform-origin:50% 50%;">Edit</div>
<div class="a" style="left:778.4px;top:28px;width:0.8px;height:47px;background:#d0d0d0;"></div>
<svg style="left:782.9px;top:31.8px" width="15" height="16" viewBox="0 0 15 16" ><path d="M7.5 0.6 L14.2 4.3 V11.7 L7.5 15.4 L0.8 11.7 V4.3Z" fill="#eef2f7" stroke="#2f5f9a" stroke-width="0.8"/><path d="M7.5 3.2 L11.9 5.6 V10.4 L7.5 12.8 L3.1 10.4 V5.6Z" fill="#fff" stroke="#2f5f9a" stroke-width="0.7"/><path d="M7.5 8 L11.9 5.6 V10.4 L7.5 12.8Z" fill="#8e8e8e"/><path d="M3.1 5.6 L7.5 8 L11.9 5.6 L7.5 3.2Z" fill="#c9d0d9"/></svg>
<svg style="left:783.4px;top:55.9px" width="14" height="15" viewBox="0 0 14 15" ><path d="M7 0.8 L13.2 4 V11 L7 14.2 L0.8 11 V4Z" fill="#fff" stroke="#2f5f9a" stroke-width="1"/><path d="M0.8 4 L7 7.2 L13.2 4 M7 7.2 V14.2" fill="none" stroke="#2f5f9a" stroke-width="1"/><path d="M7 1.9 L11.6 4.2 L7 6.4 L2.4 4.2Z" fill="#c4c9d0"/><path d="M8 8 L12.2 5.8 V10.4 L8 12.6Z" fill="#8e8e8e"/></svg>
<div class="a" style="left:802.3px;top:28px;width:0.8px;height:47px;background:#d0d0d0;"></div>
<svg style="left:806px;top:29px" width="17" height="16" viewBox="0 0 17 16" ><path d="M11 0.3 L16.5 10.6 H6.2Z" fill="#b4b6c8"/><rect x="10.6" y="4.2" width="1.1" height="3.6" fill="#fff"/><rect x="10.6" y="8.4" width="1.1" height="1.1" fill="#fff"/><circle cx="5.3" cy="11.3" r="4.6" fill="#1d4f8c"/><path d="M3.4 9.4 L7.2 13.2 M7.2 9.4 L3.4 13.2" stroke="#fff" stroke-width="1.4"/></svg>
<div class="t rb" style="left:764.20px;width:100px;text-align:center;top:48.70px;;transform:scaleX(0.8812);transform-origin:50% 50%;">Issues</div>
<div class="a" style="left:0px;top:85px;width:152px;height:11.5px;background:#d6d6d6;"></div>
<div class="t " style="left:1.6px;top:88.00px;color:#111">Sheets</div>
<svg style="left:133.8px;top:88.15px" width="6" height="5" viewBox="0 0 6 5"><path d="M0.6 0.8 L3 3.6 L5.4 0.8" fill="none" stroke="#111" stroke-width="1.1"/></svg>
<svg style="left:144.6px;top:88.35px" width="5" height="5" viewBox="0 0 5 5"><path d="M0.4 0.4 L4.6 4.6 M4.6 0.4 L0.4 4.6" stroke="#111" stroke-width="1.1"/></svg>
<div class="a" style="left:157px;top:85px;width:867px;height:11.5px;background:#d6d6d6;"></div>
<div class="t " style="left:159px;top:88.00px;transform:scaleX(0.9012);transform-origin:0 50%;color:#111">Work area</div>
<svg style="left:3.00px;top:99.30px" width="10" height="10" viewBox="0 0 10 10"><rect x="0.6" y="0.6" width="6.4" height="8" fill="#fff" stroke="#4674aa" stroke-width="0.8"/><rect x="3.6" y="5" width="5.8" height="4.2" rx="1" fill="#fff" stroke="#4674aa" stroke-width="0.8"/></svg>
<svg style="left:20.00px;top:99.30px" width="10" height="10" viewBox="0 0 10 10"><rect x="0.6" y="0.6" width="5.6" height="7" fill="#fff" stroke="#4674aa" stroke-width="0.8"/><path d="M7 4.6 V9.8 M4.4 7.2 H9.6" stroke="#1d4f8c" stroke-width="1.5"/></svg>
<svg style="left:36.60px;top:99.30px" width="10" height="10" viewBox="0 0 10 10"><rect x="0.6" y="0.6" width="5.6" height="6.8" fill="#fff" stroke="#4674aa" stroke-width="0.8"/><rect x="3.6" y="2.6" width="5.6" height="6.8" fill="#fff" stroke="#4674aa" stroke-width="0.8"/></svg>
<svg style="left:52.40px;top:99.30px" width="10" height="10" viewBox="0 0 10 10"><rect x="0.6" y="0.6" width="5.6" height="7" fill="#fff" stroke="#4674aa" stroke-width="0.8"/><path d="M5.2 5.4 L9.2 9.4 M9.2 5.4 L5.2 9.4" stroke="#1d4f8c" stroke-width="1.4"/></svg>
<svg style="left:69.30px;top:99.30px" width="10" height="10" viewBox="0 0 10 10"><path d="M0.6 0.6 H8 V8 H0.6Z M0.6 3 H8 M0.6 5.4 H8 M3 0.6 V8 M5.4 0.6 V8" fill="none" stroke="#9aa6b6" stroke-width="0.4" stroke-dasharray="0.6 0.4"/><path d="M4.2 9.4 L4.8 7 L8.4 3.2 L9.8 4.6 L6.2 8.6Z" fill="#1d4f8c"/></svg>
<svg style="left:85.10px;top:99.30px" width="11" height="10" viewBox="0 0 11 10"><rect x="2.6" y="0.8" width="5.8" height="3" fill="#fff" stroke="#4674aa" stroke-width="0.8"/><rect x="0.6" y="3.2" width="9.8" height="4.8" rx="1" fill="#fff" stroke="#4674aa" stroke-width="0.9"/><rect x="2.8" y="6" width="5.4" height="3.2" fill="#fff" stroke="#4674aa" stroke-width="0.8"/></svg>
<svg style="left:123.30px;top:99.10px" width="9" height="11" viewBox="0 0 9 11"><path d="M4.5 0.6 L8.4 5 H6.3 V10.4 H2.7 V5 H0.6Z" fill="#fff" stroke="#4674aa" stroke-width="0.8"/></svg>
<svg style="left:140.20px;top:99.10px" width="9" height="11" viewBox="0 0 9 11"><path d="M4.5 10.4 L8.4 6 H6.3 V0.6 H2.7 V6 H0.6Z" fill="#fff" stroke="#4674aa" stroke-width="0.8"/></svg>
<div class="a" style="left:0px;top:112.3px;width:152px;height:132.3px;background:#fff;"></div>
<div class="a" style="left:0px;top:186.9px;width:143.5px;height:10.4px;background:#cce4f7;"></div>
<svg style="left:4.2px;top:116.20px" width="5" height="4" viewBox="0 0 5 4"><path d="M0.5 0.6 L2.5 3 L4.5 0.6" fill="none" stroke="#222" stroke-width="1"/></svg>
<div class="t " style="left:13.4px;top:114.00px;transform:scaleX(0.8598);transform-origin:0 50%;color:#111">1_Cover</div>
<div class="t " style="left:23.8px;top:125.00px;transform:scaleX(0.9548);transform-origin:0 50%;color:#111">Cover</div>
<svg style="left:4.2px;top:137.56px" width="5" height="4" viewBox="0 0 5 4"><path d="M0.5 0.6 L2.5 3 L4.5 0.6" fill="none" stroke="#222" stroke-width="1"/></svg>
<div class="t " style="left:13.4px;top:136.00px;transform:scaleX(0.9873);transform-origin:0 50%;color:#111">2_Layout</div>
<div class="t " style="left:23.8px;top:146.00px;transform:scaleX(1.0378);transform-origin:0 50%;color:#111">Normal lighting</div>
<div class="t " style="left:23.8px;top:157.00px;transform:scaleX(1.0050);transform-origin:0 50%;color:#111">Emergency lighting</div>
<div class="t " style="left:23.8px;top:168.00px;transform:scaleX(1.0051);transform-origin:0 50%;color:#111">Luminaire layout</div>
<svg style="left:4.2px;top:180.28px" width="5" height="4" viewBox="0 0 5 4"><path d="M0.5 0.6 L2.5 3 L4.5 0.6" fill="none" stroke="#222" stroke-width="1"/></svg>
<div class="t " style="left:13.4px;top:178.00px;transform:scaleX(0.9768);transform-origin:0 50%;color:#111">3_Results</div>
<div class="t " style="left:23.8px;top:189.00px;transform:scaleX(1.0193);transform-origin:0 50%;color:#111">Illuminance. Normal lighting. Work plan</div>
<div class="t " style="left:23.8px;top:200.00px;transform:scaleX(1.0034);transform-origin:0 50%;color:#111">Illuminance. Normal lighting. Ground le...</div>
<div class="t " style="left:23.8px;top:210.00px;transform:scaleX(0.9923);transform-origin:0 50%;color:#111">UGR. Normal lighting. Work plan</div>
<div class="t " style="left:23.8px;top:221.00px;transform:scaleX(0.9911);transform-origin:0 50%;color:#111">Illuminance. Emergency lighting. Groun...</div>
<div class="t " style="left:23.8px;top:232.00px;transform:scaleX(1.0096);transform-origin:0 50%;color:#111">Daylight factor. Work plan</div>
<div class="a" style="left:73.0px;top:246px;width:0.8px;height:0.8px;background:#9a9a9a;"></div>
<div class="a" style="left:74.7px;top:246px;width:0.8px;height:0.8px;background:#9a9a9a;"></div>
<div class="a" style="left:76.4px;top:246px;width:0.8px;height:0.8px;background:#9a9a9a;"></div>
<div class="a" style="left:78.1px;top:246px;width:0.8px;height:0.8px;background:#9a9a9a;"></div>
<div class="a" style="left:0px;top:249.2px;width:152px;height:9.6px;background:#d6d6d6;"></div>
<div class="t " style="left:1.6px;top:251.00px;color:#111">Layers</div>
<svg style="left:133.8px;top:251.40px" width="6" height="5" viewBox="0 0 6 5"><path d="M0.6 0.8 L3 3.6 L5.4 0.8" fill="none" stroke="#111" stroke-width="1.1"/></svg>
<svg style="left:144.6px;top:251.60px" width="5" height="5" viewBox="0 0 5 5"><path d="M0.4 0.4 L4.6 4.6 M4.6 0.4 L0.4 4.6" stroke="#111" stroke-width="1.1"/></svg>
<svg style="left:2.20px;top:262.00px" width="8" height="8" viewBox="0 0 8 8"><path d="M4 0.4 V7.6 M0.4 4 H7.6" stroke="#222" stroke-width="0.95"/></svg>
<svg style="left:14.70px;top:262.50px" width="7" height="7" viewBox="0 0 7 7"><path d="M0.6 0.6 L6.4 6.4 M6.4 0.6 L0.6 6.4" stroke="#d63a36" stroke-width="1.25"/></svg>
<div class="a" style="left:26.3px;top:261.6px;width:0.6px;height:9px;background:#c4c4c4;"></div>
<svg style="left:31.10px;top:264.00px" width="7" height="4" viewBox="0 0 7 4"><path d="M0.2 3.8 L3.5 0.2 L6.8 3.8Z" fill="#222"/></svg>
<svg style="left:44.00px;top:264.00px" width="7" height="4" viewBox="0 0 7 4"><path d="M0.2 0.2 L3.5 3.8 L6.8 0.2Z" fill="#222"/></svg>
<div class="a" style="left:55.4px;top:261.6px;width:0.6px;height:9px;background:#c4c4c4;"></div>
<svg style="left:60.30px;top:262.00px" width="9" height="8" viewBox="0 0 9 8"><path d="M4.5 0.8 L8.4 2.6 L4.5 4.4 L0.6 2.6Z M0.8 4.4 L4.5 6.2 L8.2 4.4" fill="none" stroke="#7aa7cf" stroke-width="0.6"/><circle cx="4.5" cy="4.6" r="1.3" fill="#fff" stroke="#7aa7cf" stroke-width="0.5"/></svg>
<svg style="left:71.30px;top:262.00px" width="9" height="8" viewBox="0 0 9 8"><path d="M4.5 0.8 L8.4 2.6 L4.5 4.4 L0.6 2.6Z M0.8 4.4 L4.5 6.2 L8.2 4.4" fill="none" stroke="#7aa7cf" stroke-width="0.6"/><path d="M4.5 3 V7.6 M3.2 4.4 L4.5 3 L5.8 4.4" stroke="#7aa7cf" stroke-width="0.5" fill="none"/></svg>
<div class="a" style="left:0px;top:273.2px;width:152px;height:71.2px;background:#fff;"></div>
<div class="a" style="left:0px;top:273.2px;width:152px;height:11.2px;background:#f1f1f1;"></div>
<div class="t " style="left:2.9px;top:276.00px;transform:scaleX(1.0213);transform-origin:0 50%;color:#111">Active</div>
<div class="t " style="left:28px;top:276.00px;transform:scaleX(0.9313);transform-origin:0 50%;color:#111">Reference</div>
<div class="a" style="left:24.5px;top:274px;width:0.5px;height:9px;background:#dcdcdc;"></div>
<div class="a" style="left:119.6px;top:274px;width:0.5px;height:9px;background:#dcdcdc;"></div>
<div class="a" style="left:135.4px;top:274px;width:0.5px;height:9px;background:#dcdcdc;"></div>
<div class="a" style="left:152px;top:274px;width:0.5px;height:9px;background:#dcdcdc;"></div>
<div class="a" style="left:0px;top:284.3px;width:152px;height:10.6px;background:#e5f1fb;"></div>
<div class="a" style="left:9px;top:286.80px;width:5.8px;height:5.8px;background:#fff;border:0.7px solid #a6a6a6"></div>
<div class="t " style="left:28px;top:287.00px;transform:scaleX(0.9819);transform-origin:0 50%;color:#111">Template</div>
<svg style="left:124.2px;top:287.60px" width="7" height="4" viewBox="0 0 7 4"><path d="M0.3 2 Q3.5 -1.2 6.7 2 Q3.5 5.2 0.3 2Z" fill="#dbe8f4" stroke="#6e9cc6" stroke-width="0.5"/><circle cx="3.5" cy="2" r="1.2" fill="#356a9f"/></svg>
<svg style="left:140.6px;top:286.00px" width="6.4" height="7.4" viewBox="0 0 6.4 7.4"><path d="M1.4 3.4 V2 Q1.4 0.4 3 0.4 Q4.4 0.4 4.6 1.6" fill="none" stroke="#7aa7cf" stroke-width="0.6"/><rect x="0.5" y="3.4" width="5.2" height="3.6" fill="#fff" stroke="#7aa7cf" stroke-width="0.6"/><path d="M2.2 4.6 V6.2 M3.4 4.6 V6.2" stroke="#7aa7cf" stroke-width="0.5"/></svg>
<div class="a" style="left:0px;top:294.98px;width:152px;height:10.6px;background:#f5f5f5;"></div>
<div class="a" style="left:9px;top:297.48px;width:5.8px;height:5.8px;background:#fff;border:0.7px solid #a6a6a6"></div>
<svg style="left:9.6px;top:298.08px" width="4.4" height="4.4" viewBox="0 0 4.4 4.4"><path d="M0.5 2.2 L1.7 3.6 L3.9 0.6" fill="none" stroke="#000" stroke-width="1.15"/></svg>
<div class="t " style="left:28px;top:297.00px;transform:scaleX(0.9812);transform-origin:0 50%;color:#111">Title box</div>
<svg style="left:124.2px;top:298.28px" width="7" height="4" viewBox="0 0 7 4"><path d="M0.3 2 Q3.5 -1.2 6.7 2 Q3.5 5.2 0.3 2Z" fill="#dbe8f4" stroke="#6e9cc6" stroke-width="0.5"/><circle cx="3.5" cy="2" r="1.2" fill="#356a9f"/></svg>
<svg style="left:140.6px;top:296.68px" width="6.4" height="7.4" viewBox="0 0 6.4 7.4"><path d="M1.4 3.4 V2 Q1.4 0.4 3 0.4 Q4.4 0.4 4.6 1.6" fill="none" stroke="#7aa7cf" stroke-width="0.6"/><rect x="0.5" y="3.4" width="5.2" height="3.6" fill="#fff" stroke="#7aa7cf" stroke-width="0.6"/><path d="M2.2 4.6 V6.2 M3.4 4.6 V6.2" stroke="#7aa7cf" stroke-width="0.5"/></svg>
<div class="a" style="left:0px;top:305.66px;width:152px;height:10.6px;background:#fff;"></div>
<div class="a" style="left:9px;top:308.16px;width:5.8px;height:5.8px;background:#fff;border:0.7px solid #a6a6a6"></div>
<div class="t " style="left:28px;top:308.00px;transform:scaleX(0.9988);transform-origin:0 50%;color:#111">Dimension</div>
<svg style="left:124.2px;top:308.96px" width="7" height="4" viewBox="0 0 7 4"><path d="M0.3 2 Q3.5 -1.2 6.7 2 Q3.5 5.2 0.3 2Z" fill="#dbe8f4" stroke="#6e9cc6" stroke-width="0.5"/><circle cx="3.5" cy="2" r="1.2" fill="#356a9f"/></svg>
<svg style="left:140.6px;top:307.36px" width="6.4" height="7.4" viewBox="0 0 6.4 7.4"><path d="M1.4 3.4 V2 Q1.4 0.4 3 0.4 Q4.4 0.4 4.6 1.6" fill="none" stroke="#7aa7cf" stroke-width="0.6"/><rect x="0.5" y="3.4" width="5.2" height="3.6" fill="#fff" stroke="#7aa7cf" stroke-width="0.6"/><path d="M2.2 4.6 V6.2 M3.4 4.6 V6.2" stroke="#7aa7cf" stroke-width="0.5"/></svg>
<div class="a" style="left:0px;top:316.34000000000003px;width:152px;height:10.6px;background:#f5f5f5;"></div>
<div class="a" style="left:9px;top:318.84px;width:5.8px;height:5.8px;background:#fff;border:0.7px solid #a6a6a6"></div>
<div class="t " style="left:28px;top:319.00px;transform:scaleX(0.9462);transform-origin:0 50%;color:#111">Layer 0</div>
<svg style="left:124.2px;top:319.64px" width="7" height="4" viewBox="0 0 7 4"><path d="M0.3 2 Q3.5 -1.2 6.7 2 Q3.5 5.2 0.3 2Z" fill="#dbe8f4" stroke="#6e9cc6" stroke-width="0.5"/><circle cx="3.5" cy="2" r="1.2" fill="#356a9f"/></svg>
<svg style="left:140.6px;top:318.04px" width="6.4" height="7.4" viewBox="0 0 6.4 7.4"><path d="M1.4 3.4 V2 Q1.4 0.4 3 0.4 Q4.4 0.4 4.6 1.6" fill="none" stroke="#7aa7cf" stroke-width="0.6"/><rect x="0.5" y="3.4" width="5.2" height="3.6" fill="#fff" stroke="#7aa7cf" stroke-width="0.6"/><path d="M2.2 4.6 V6.2 M3.4 4.6 V6.2" stroke="#7aa7cf" stroke-width="0.5"/></svg>
<div class="a" style="left:154.2px;top:311.8px;width:0.9px;height:0.9px;background:#8a8a8a;"></div>
<div class="a" style="left:154.2px;top:313.90000000000003px;width:0.9px;height:0.9px;background:#8a8a8a;"></div>
<div class="a" style="left:154.2px;top:316.0px;width:0.9px;height:0.9px;background:#8a8a8a;"></div>
<div class="a" style="left:154.2px;top:318.1px;width:0.9px;height:0.9px;background:#8a8a8a;"></div>
<div class="a" style="left:0px;top:349px;width:152px;height:8.7px;background:#d6d6d6;"></div>
<div class="t " style="left:2.9px;top:351.00px;transform:scaleX(0.9624);transform-origin:0 50%;color:#111">View on screen</div>
<div class="t " style="left:1.5px;top:364.00px;transform:scaleX(1.0077);transform-origin:0 50%;color:#111">Colour</div>
<div class="a" style="left:24.5px;top:360.4px;width:126.2px;height:12.8px;background:#fff;border:0.7px solid #858585"></div>
<div class="t " style="left:27.4px;top:364.00px;transform:scaleX(1.0266);transform-origin:0 50%;color:#111">Printing colour</div>
<svg style="left:143.6px;top:365.6px" width="5" height="3" viewBox="0 0 5 3"><path d="M0.4 0.4 L2.5 2.4 L4.6 0.4" fill="none" stroke="#444" stroke-width="0.6"/></svg>
<div class="a" style="left:1.5px;top:379px;width:6.6px;height:6.6px;background:#fff;border:0.7px solid #666"></div>
<div class="t " style="left:10.4px;top:380.00px;transform:scaleX(0.9819);transform-origin:0 50%;color:#111">Represent lines with print thickness</div>
<div class="a" style="left:73.0px;top:390.2px;width:0.8px;height:0.8px;background:#9a9a9a;"></div>
<div class="a" style="left:74.7px;top:390.2px;width:0.8px;height:0.8px;background:#9a9a9a;"></div>
<div class="a" style="left:76.4px;top:390.2px;width:0.8px;height:0.8px;background:#9a9a9a;"></div>
<div class="a" style="left:78.1px;top:390.2px;width:0.8px;height:0.8px;background:#9a9a9a;"></div>
<div class="a" style="left:0px;top:393.6px;width:152px;height:9.3px;background:#d6d6d6;"></div>
<div class="t " style="left:1.6px;top:395.00px;color:#111">Categories</div>
<svg style="left:133.8px;top:395.65px" width="6" height="5" viewBox="0 0 6 5"><path d="M0.6 0.8 L3 3.6 L5.4 0.8" fill="none" stroke="#111" stroke-width="1.1"/></svg>
<svg style="left:144.6px;top:395.85px" width="5" height="5" viewBox="0 0 5 5"><path d="M0.4 0.4 L4.6 4.6 M4.6 0.4 L0.4 4.6" stroke="#111" stroke-width="1.1"/></svg>
<div class="a" style="left:0px;top:402.9px;width:152px;height:142.3px;background:#fff;"></div>
<div class="a" style="left:0px;top:402.9px;width:152px;height:12.6px;background:#f1f1f1;"></div>
<div class="t " style="left:3px;top:407.00px;transform:scaleX(0.9858);transform-origin:0 50%;color:#111">Category</div>
<div class="t " style="left:119.4px;top:407.00px;transform:scaleX(0.9736);transform-origin:0 50%;color:#111">Snappable</div>
<div class="a" style="left:115.8px;top:404px;width:0.5px;height:11px;background:#dcdcdc;"></div>
<div class="a" style="left:152px;top:404px;width:0.5px;height:11px;background:#dcdcdc;"></div>
<div class="a" style="left:0px;top:415.5px;width:152px;height:10.6px;background:#e5f1fb;"></div>
<div class="t " style="left:3px;top:418.00px;transform:scaleX(1.0086);transform-origin:0 50%;color:#111">AnnotationLightFixtureTag</div>
<div class="a" style="left:131.2px;top:418.00px;width:5.8px;height:5.8px;background:#fff;border:0.7px solid #a0a0a0"></div>
<svg style="left:131.8px;top:418.60px" width="4.4" height="4.4" viewBox="0 0 4.4 4.4"><path d="M0.5 2.2 L1.7 3.6 L3.9 0.6" fill="none" stroke="#000" stroke-width="1.15"/></svg>
<div class="a" style="left:0px;top:426.18px;width:152px;height:10.6px;background:#f5f5f5;"></div>
<div class="t " style="left:3px;top:428.00px;transform:scaleX(1.0238);transform-origin:0 50%;color:#111">AnnotationLightingIsolines</div>
<div class="a" style="left:131.2px;top:428.68px;width:5.8px;height:5.8px;background:#fff;border:0.7px solid #a0a0a0"></div>
<svg style="left:131.8px;top:429.28px" width="4.4" height="4.4" viewBox="0 0 4.4 4.4"><path d="M0.5 2.2 L1.7 3.6 L3.9 0.6" fill="none" stroke="#000" stroke-width="1.15"/></svg>
<div class="a" style="left:0px;top:436.86px;width:152px;height:10.6px;background:#fff;"></div>
<div class="t " style="left:3px;top:439.00px;transform:scaleX(1.0117);transform-origin:0 50%;color:#111">AnnotationLightingIsovalues</div>
<div class="a" style="left:131.2px;top:439.36px;width:5.8px;height:5.8px;background:#fff;border:0.7px solid #a0a0a0"></div>
<svg style="left:131.8px;top:439.96px" width="4.4" height="4.4" viewBox="0 0 4.4 4.4"><path d="M0.5 2.2 L1.7 3.6 L3.9 0.6" fill="none" stroke="#000" stroke-width="1.15"/></svg>
<div class="a" style="left:0px;top:447.54px;width:152px;height:10.6px;background:#f5f5f5;"></div>
<div class="t " style="left:3px;top:450.00px;transform:scaleX(1.0100);transform-origin:0 50%;color:#111">AnnotationLightingWorstValues</div>
<div class="a" style="left:131.2px;top:450.04px;width:5.8px;height:5.8px;background:#fff;border:0.7px solid #a0a0a0"></div>
<svg style="left:131.8px;top:450.64px" width="4.4" height="4.4" viewBox="0 0 4.4 4.4"><path d="M0.5 2.2 L1.7 3.6 L3.9 0.6" fill="none" stroke="#000" stroke-width="1.15"/></svg>
<div class="a" style="left:0px;top:458.21999999999997px;width:152px;height:10.6px;background:#fff;"></div>
<div class="t " style="left:3px;top:461.00px;transform:scaleX(0.9665);transform-origin:0 50%;color:#111">Doors</div>
<div class="a" style="left:131.2px;top:460.72px;width:5.8px;height:5.8px;background:#fff;border:0.7px solid #a0a0a0"></div>
<svg style="left:131.8px;top:461.32px" width="4.4" height="4.4" viewBox="0 0 4.4 4.4"><path d="M0.5 2.2 L1.7 3.6 L3.9 0.6" fill="none" stroke="#000" stroke-width="1.15"/></svg>
<div class="a" style="left:0px;top:468.9px;width:152px;height:10.6px;background:#f5f5f5;"></div>
<div class="t " style="left:3px;top:471.00px;transform:scaleX(0.9125);transform-origin:0 50%;color:#111">Façades</div>
<div class="a" style="left:131.2px;top:471.40px;width:5.8px;height:5.8px;background:#fff;border:0.7px solid #a0a0a0"></div>
<svg style="left:131.8px;top:472.00px" width="4.4" height="4.4" viewBox="0 0 4.4 4.4"><path d="M0.5 2.2 L1.7 3.6 L3.9 0.6" fill="none" stroke="#000" stroke-width="1.15"/></svg>
<div class="a" style="left:0px;top:479.58px;width:152px;height:10.6px;background:#fff;"></div>
<div class="t " style="left:3px;top:482.00px;transform:scaleX(1.0196);transform-origin:0 50%;color:#111">Interior partitions</div>
<div class="a" style="left:131.2px;top:482.08px;width:5.8px;height:5.8px;background:#fff;border:0.7px solid #a0a0a0"></div>
<svg style="left:131.8px;top:482.68px" width="4.4" height="4.4" viewBox="0 0 4.4 4.4"><path d="M0.5 2.2 L1.7 3.6 L3.9 0.6" fill="none" stroke="#000" stroke-width="1.15"/></svg>
<div class="a" style="left:0px;top:490.26px;width:152px;height:10.6px;background:#f5f5f5;"></div>
<div class="t " style="left:3px;top:493.00px;transform:scaleX(0.9837);transform-origin:0 50%;color:#111">Lights</div>
<div class="a" style="left:131.2px;top:492.76px;width:5.8px;height:5.8px;background:#fff;border:0.7px solid #a0a0a0"></div>
<svg style="left:131.8px;top:493.36px" width="4.4" height="4.4" viewBox="0 0 4.4 4.4"><path d="M0.5 2.2 L1.7 3.6 L3.9 0.6" fill="none" stroke="#000" stroke-width="1.15"/></svg>
<div class="a" style="left:0px;top:500.94px;width:152px;height:10.6px;background:#fff;"></div>
<div class="t " style="left:3px;top:503.00px;transform:scaleX(0.9570);transform-origin:0 50%;color:#111">Roofs</div>
<div class="a" style="left:131.2px;top:503.44px;width:5.8px;height:5.8px;background:#fff;border:0.7px solid #a0a0a0"></div>
<svg style="left:131.8px;top:504.04px" width="4.4" height="4.4" viewBox="0 0 4.4 4.4"><path d="M0.5 2.2 L1.7 3.6 L3.9 0.6" fill="none" stroke="#000" stroke-width="1.15"/></svg>
<div class="a" style="left:0px;top:511.62000000000006px;width:152px;height:10.6px;background:#f5f5f5;"></div>
<div class="t " style="left:3px;top:514.00px;transform:scaleX(0.9986);transform-origin:0 50%;color:#111">SpatialZoneLighting</div>
<div class="a" style="left:131.2px;top:514.12px;width:5.8px;height:5.8px;background:#fff;border:0.7px solid #a0a0a0"></div>
<svg style="left:131.8px;top:514.72px" width="4.4" height="4.4" viewBox="0 0 4.4 4.4"><path d="M0.5 2.2 L1.7 3.6 L3.9 0.6" fill="none" stroke="#000" stroke-width="1.15"/></svg>
<div class="a" style="left:0px;top:522.3000000000001px;width:152px;height:10.6px;background:#fff;"></div>
<div class="t " style="left:3px;top:525.00px;transform:scaleX(1.0014);transform-origin:0 50%;color:#111">Windows</div>
<div class="a" style="left:131.2px;top:524.80px;width:5.8px;height:5.8px;background:#fff;border:0.7px solid #a0a0a0"></div>
<svg style="left:131.8px;top:525.40px" width="4.4" height="4.4" viewBox="0 0 4.4 4.4"><path d="M0.5 2.2 L1.7 3.6 L3.9 0.6" fill="none" stroke="#000" stroke-width="1.15"/></svg>
<svg style="left:4.4px;top:545.9px" width="8.8" height="8.8" viewBox="0 0 8 8"><circle cx="4" cy="4" r="3.7" fill="#1e73c8"/><rect x="3.5" y="3.2" width="1" height="3" fill="#fff"/><circle cx="4" cy="2" r="0.6" fill="#fff"/></svg>
<div class="t " style="left:16.8px;top:547.00px;transform:scaleX(1.0031);transform-origin:0 50%;color:#111">Select an option from the menu.</div>
<div class="a" style="left:727px;top:104.6px;font-family:'DejaVu Sans','Liberation Sans',sans-serif;font-size:9.1px;line-height:12px;color:#1c1c1c">DIN A3 - Landscape (420x297) mm</div>
<div class="a" style="left:292px;top:115px;width:596px;height:422px;background:#fff;border:1px solid #6c6c6c"></div>
<div class="a" style="left:314px;top:130.3px;width:553px;height:392.6px;border:0.8px solid #9a9a9a"></div>
<div class="a" style="font-size:5.3px;line-height:7.3px;height:7.3px;color:#2a2a2a;top:419px;left:308.60px;width:200px;text-align:center;transform:scaleX(1.1201);transform-origin:50% 50%;">Ground floor</div>
<div class="a" style="font-size:5.3px;line-height:7.3px;height:7.3px;color:#2a2a2a;top:425px;left:308.80px;width:200px;text-align:center;transform:scaleX(1.1160);transform-origin:50% 50%;">Escala 1:100</div>
<div class="a" style="font-size:5.3px;line-height:7.3px;height:7.3px;color:#2a2a2a;top:354px;left:568.80px;width:200px;text-align:center;transform:scaleX(1.0922);transform-origin:50% 50%;">3D</div>
<div class="a" style="font-size:5.3px;line-height:7.3px;height:7.3px;color:#2a2a2a;top:360px;left:569.00px;width:200px;text-align:center;transform:scaleX(1.1258);transform-origin:50% 50%;">Escala 1:100</div>
<div class="a" style="left:325.8px;top:153.3px;width:166px;height:239.6px;border:0.7px solid #a8a8a8"></div>
<svg style="left:0;top:0" width="1024" height="555" viewBox="0 0 1024 555"><g stroke="#8a8a8a" stroke-width="0.55" fill="none"><path d="M714.3 386.8 H832.4"/><path d="M714.3 392 H832.4"/><path d="M714.3 397.4 H832.4"/><path d="M714.3 403.5 H832.4"/><path d="M714.3 410.1 H832.4"/><path d="M714.3 416.4 H832.4"/><path d="M714.3 422.8 H832.4"/><path d="M714.3 386.8 V422.8 M832.4 386.8 V422.8 M773.4 392 V422.8"/></g></svg>
<div class="a" style="font-size:3.9px;line-height:5.9px;height:5.9px;color:#8a8a8a;top:387px;left:673.70px;width:200px;text-align:center;transform:scaleX(1.2376);transform-origin:50% 50%;">Illuminance. Normal lighting. Work plan (Ground floor)</div>
<div class="a" style="font-size:4.2px;line-height:6.2px;height:6.2px;color:#8a8a8a;top:392px;left:644.00px;width:200px;text-align:center;transform:scaleX(1.3579);transform-origin:50% 50%;">Zona</div>
<div class="a" style="font-size:4.2px;line-height:6.2px;height:6.2px;color:#8a8a8a;top:392px;left:702.00px;width:200px;text-align:center;transform:scaleX(1.2153);transform-origin:50% 50%;">Em (lux)</div>
<div class="a" style="font-size:4.8px;line-height:6.8px;height:6.8px;color:#111;top:399px;left:573.20px;width:200px;text-align:right;transform:scaleX(1.1245);transform-origin:100% 50%;">Dining room</div>
<div class="a" style="font-size:4.8px;line-height:6.8px;height:6.8px;color:#111;top:399px;left:773.6px;transform:scaleX(1.2260);transform-origin:0 50%;">419.49</div>
<div class="a" style="font-size:4.8px;line-height:6.8px;height:6.8px;color:#111;top:406px;left:573.20px;width:200px;text-align:right;transform:scaleX(1.1243);transform-origin:100% 50%;">Kitchen</div>
<div class="a" style="font-size:4.8px;line-height:6.8px;height:6.8px;color:#111;top:406px;left:773.6px;transform:scaleX(1.2260);transform-origin:0 50%;">519.25</div>
<div class="a" style="font-size:4.8px;line-height:6.8px;height:6.8px;color:#111;top:412px;left:573.20px;width:200px;text-align:right;transform:scaleX(1.1383);transform-origin:100% 50%;">Toilet Women</div>
<div class="a" style="font-size:4.8px;line-height:6.8px;height:6.8px;color:#111;top:412px;left:773.6px;transform:scaleX(1.2260);transform-origin:0 50%;">335.18</div>
<div class="a" style="font-size:4.8px;line-height:6.8px;height:6.8px;color:#111;top:418px;left:573.20px;width:200px;text-align:right;transform:scaleX(1.1245);transform-origin:100% 50%;">Toilet Men</div>
<div class="a" style="font-size:4.8px;line-height:6.8px;height:6.8px;color:#111;top:418px;left:773.6px;transform:scaleX(1.2260);transform-origin:0 50%;">337.31</div>
<svg style="left:0;top:0" width="1024" height="555" viewBox="0 0 1024 555"><g stroke="#8a8a8a" stroke-width="0.6" fill="none"><path d="M676.3 454.9 H866.5 M676.3 454.9 V522.6 M798.5 454.9 V522.6 M676.3 468.55 H798.5 M676.3 481.8 H759.5 M676.3 495.3 H798.5 M676.3 509 H798.5 M719.2 454.9 V495.3 M719.2 509 V522.6 M759.5 468.55 V495.3"/></g></svg>
<div class="a" style="font-size:2.7px;line-height:4.7px;height:4.7px;color:#9a9a9a;top:456px;left:676.9px;transform:scaleX(0.7858);transform-origin:0 50%;">Project name</div>
<div class="a" style="font-size:2.7px;line-height:4.7px;height:4.7px;color:#9a9a9a;top:456px;left:719.8px;transform:scaleX(0.7982);transform-origin:0 50%;">Client name</div>
<div class="a" style="font-size:2.7px;line-height:4.7px;height:4.7px;color:#9a9a9a;top:469px;left:676.9px;transform:scaleX(0.8077);transform-origin:0 50%;">Address</div>
<div class="a" style="font-size:2.7px;line-height:4.7px;height:4.7px;color:#9a9a9a;top:469px;left:719.8px;transform:scaleX(0.8065);transform-origin:0 50%;">Date</div>
<div class="a" style="font-size:2.7px;line-height:4.7px;height:4.7px;color:#9a9a9a;top:469px;left:760.2px;">N&ordm;</div>
<div class="a" style="font-size:2.7px;line-height:4.7px;height:4.7px;color:#9a9a9a;top:483px;left:676.9px;transform:scaleX(0.8253);transform-origin:0 50%;">Project status</div>
<div class="a" style="font-size:2.7px;line-height:4.7px;height:4.7px;color:#9a9a9a;top:483px;left:719.8px;transform:scaleX(0.7995);transform-origin:0 50%;">Scale</div>
<div class="a" style="font-size:2.7px;line-height:4.7px;height:4.7px;color:#9a9a9a;top:496px;left:676.9px;transform:scaleX(0.7995);transform-origin:0 50%;">Designed by</div>
<div class="a" style="font-size:2.7px;line-height:4.7px;height:4.7px;color:#9a9a9a;top:510px;left:676.9px;transform:scaleX(0.8566);transform-origin:0 50%;">Verified by</div>
<div class="a" style="font-size:2.7px;line-height:4.7px;height:4.7px;color:#9a9a9a;top:510px;left:719.8px;transform:scaleX(0.7755);transform-origin:0 50%;">Drawing name</div>
<div class="a" style="font-size:4.6px;line-height:6.6px;height:6.6px;color:#111;top:462px;left:676.9px;transform:scaleX(0.9955);transform-origin:0 50%;">Restaurant</div>
<div class="a" style="font-size:4.6px;line-height:6.6px;height:6.6px;color:#111;top:475px;left:676.9px;transform:scaleX(0.9815);transform-origin:0 50%;">Av. Loring 5, Alicante</div>
<div class="a" style="font-size:4.6px;line-height:6.6px;height:6.6px;color:#111;top:475px;left:719.8px;transform:scaleX(0.9338);transform-origin:0 50%;">25/02/2025</div>
<div class="a" style="font-size:4.6px;line-height:6.6px;height:6.6px;color:#111;top:489px;left:676.9px;transform:scaleX(0.9547);transform-origin:0 50%;">Finished</div>
<div class="a" style="font-size:4.6px;line-height:6.6px;height:6.6px;color:#111;top:489px;left:720.4px;transform:scaleX(0.9556);transform-origin:0 50%;">1:100</div>
<div class="a" style="font-size:4.6px;line-height:6.6px;height:6.6px;color:#111;top:502px;left:676.9px;transform:scaleX(0.9260);transform-origin:0 50%;">CYPE</div>
<div class="a" style="font-size:4.6px;line-height:6.6px;height:6.6px;color:#111;top:516px;left:676.9px;transform:scaleX(0.9260);transform-origin:0 50%;">CYPE</div>
<div class="a" style="font-size:4.6px;line-height:6.6px;height:6.6px;color:#111;top:516px;left:721.2px;transform:scaleX(0.9613);transform-origin:0 50%;">Illuminance. Normal lighting. Work plan</div>
<div class="a" style="font-size:15.9px;line-height:17.9px;height:17.9px;color:#111;top:476px;left:681.30px;width:200px;text-align:center;">5</div>
<svg style="left:805px;top:461px" width="60" height="56" viewBox="805 461 60 56">
<defs><radialGradient id="cyg" cx="0.42" cy="0.35" r="0.75"><stop offset="0" stop-color="#e21a26"/><stop offset="0.55" stop-color="#c4141c"/><stop offset="1" stop-color="#8a0c12"/></radialGradient></defs>
<path d="M808 474 Q808 462.5 819 465.2 Q842 472 856.5 482.5 Q863.5 488.3 856.5 494 Q842 505 819 512 Q808 514.5 808 503 Z" fill="url(#cyg)"/>
<text x="0" y="0" transform="translate(813.2 493.4) scale(0.77 0.97)" font-family="Liberation Sans, sans-serif" font-weight="bold" font-size="20.5" fill="#fff" stroke="#fff" stroke-width="0.55" letter-spacing="-0.3">cype</text>
</svg>
<svg style="left:0;top:0" width="1024" height="555" viewBox="0 0 1024 555"><g transform="translate(326.0 153.5)"><rect x="1.2" y="2.4" width="163.4" height="1.6" fill="#e3e7ee" stroke="#9aa1ad" stroke-width="0.3"/><rect x="1.2" y="237" width="163.4" height="1.6" fill="#e3e7ee" stroke="#9aa1ad" stroke-width="0.3"/><rect x="1.2" y="2.4" width="1.8" height="236" fill="#e3e7ee" stroke="#9aa1ad" stroke-width="0.3"/><rect x="162.8" y="2.4" width="1.8" height="236" fill="#e3e7ee" stroke="#9aa1ad" stroke-width="0.3"/><rect x="61.2" y="4" width="1.9" height="70" fill="#e3e7ee" stroke="#9aa1ad" stroke-width="0.3"/><rect x="1.2" y="72.6" width="163.4" height="1.7" fill="#e3e7ee" stroke="#9aa1ad" stroke-width="0.3"/><rect x="30.6" y="4" width="3.2" height="53" fill="#e3e7ee" stroke="#9aa1ad" stroke-width="0.3"/><rect x="15" y="20.4" width="34" height="2" fill="#e3e7ee" stroke="#9aa1ad" stroke-width="0.3"/><rect x="1" y="100" width="2.2" height="22" fill="#c4c4c4" stroke="#8a8a8a" stroke-width="0.3"/><rect x="1" y="160" width="2.2" height="22" fill="#c4c4c4" stroke="#8a8a8a" stroke-width="0.3"/><rect x="162.6" y="100" width="2.2" height="22" fill="#c4c4c4" stroke="#8a8a8a" stroke-width="0.3"/><rect x="162.6" y="160" width="2.2" height="22" fill="#c4c4c4" stroke="#8a8a8a" stroke-width="0.3"/><rect x="30" y="236.8" width="22" height="2" fill="#c4c4c4" stroke="#8a8a8a" stroke-width="0.3"/><rect x="72" y="236.8" width="28" height="2" fill="#c4c4c4" stroke="#8a8a8a" stroke-width="0.3"/><rect x="118" y="236.8" width="26" height="2" fill="#c4c4c4" stroke="#8a8a8a" stroke-width="0.3"/><rect x="1" y="205" width="2.2" height="18" fill="#c4c4c4" stroke="#8a8a8a" stroke-width="0.3"/><rect x="162.6" y="205" width="2.2" height="18" fill="#c4c4c4" stroke="#8a8a8a" stroke-width="0.3"/><rect x="19.8" y="57.6" width="24.6" height="1.5" fill="#333"/><rect x="19.8" y="60" width="2" height="13" fill="#c4c4c4" stroke="#888" stroke-width="0.3"/><rect x="42.4" y="60" width="2" height="13" fill="#c4c4c4" stroke="#888" stroke-width="0.3"/><circle cx="17.5" cy="60.5" r="1.6" fill="#ddd" stroke="#999" stroke-width="0.3"/><circle cx="46.5" cy="60.5" r="1.6" fill="#ddd" stroke="#999" stroke-width="0.3"/><rect x="15" y="8" width="4" height="6" fill="#bbb" stroke="#777" stroke-width="0.3"/><path d="M20 4 V14" stroke="#b03030" stroke-width="0.4"/><path d="M18 4 V10" stroke="#b03030" stroke-width="0.3"/><rect x="46" y="8" width="4" height="6" fill="#bbb" stroke="#777" stroke-width="0.3"/><path d="M51 4 V14" stroke="#b03030" stroke-width="0.4"/><path d="M49 4 V10" stroke="#b03030" stroke-width="0.3"/><circle cx="79.5" cy="21" r="0.8" fill="none" stroke="#333" stroke-width="0.25"/><circle cx="79.5" cy="56" r="0.8" fill="none" stroke="#333" stroke-width="0.25"/><circle cx="112.4" cy="21" r="0.8" fill="none" stroke="#333" stroke-width="0.25"/><circle cx="112.4" cy="56" r="0.8" fill="none" stroke="#333" stroke-width="0.25"/><circle cx="144" cy="21" r="0.8" fill="none" stroke="#333" stroke-width="0.25"/><circle cx="144" cy="56" r="0.8" fill="none" stroke="#333" stroke-width="0.25"/><rect x="17.4" y="88.5" width="24.6" height="2" fill="#777"/><rect x="17.4" y="148.3" width="24.6" height="2" fill="#777"/><rect x="17.4" y="207.5" width="24.6" height="2" fill="#777"/><rect x="70.10000000000001" y="88.5" width="24.6" height="2" fill="#777"/><rect x="70.10000000000001" y="148.3" width="24.6" height="2" fill="#777"/><rect x="70.10000000000001" y="207.5" width="24.6" height="2" fill="#777"/><rect x="123.50000000000001" y="88.5" width="24.6" height="2" fill="#777"/><rect x="123.50000000000001" y="148.3" width="24.6" height="2" fill="#777"/><rect x="123.50000000000001" y="207.5" width="24.6" height="2" fill="#777"/><g fill="none" stroke-linejoin="round"><path d="M86.8 21.0C86.9 22.9 85.7 25.9 84.5 27.2C83.3 28.5 81.0 28.9 79.5 28.8C78.0 28.6 76.4 27.5 75.3 26.2C74.2 24.9 73.0 22.8 73.0 21.0C72.9 19.2 74.0 17.0 75.1 15.5C76.1 14.1 78.0 12.1 79.5 12.2C81.0 12.2 82.6 14.3 83.8 15.7C85.0 17.2 86.7 19.1 86.8 21.0Z" stroke="#4a38a0" stroke-width="0.39" opacity="0.95"/><path d="M89.3 21.0L88.3 29.9L80.9 30.6L74.9 30.5L68.4 25.9L69.5 16.6L75.2 12.2L81.1 9.9L88.3 12.1Z" stroke="#2e2e78" stroke-width="0.32" opacity="0.95"/><path d="M92.1 21.0C91.7 24.4 92.3 27.6 91.0 30.3C89.7 33.0 87.0 35.7 84.2 37.1C81.4 38.5 76.9 40.0 74.3 38.7C71.7 37.5 70.3 32.5 68.8 29.6C67.3 26.6 65.3 23.9 65.3 21.0C65.3 18.1 67.2 14.9 68.8 12.4C70.4 9.9 72.5 7.3 75.1 5.9C77.7 4.5 81.4 3.4 84.5 4.0C87.5 4.7 92.0 7.1 93.3 9.9C94.6 12.7 92.5 17.6 92.1 21.0Z" stroke="#4a38a0" stroke-width="0.37" opacity="0.95"/><path d="M85.1 56.0C85.2 58.1 85.6 60.9 84.7 62.4C83.7 63.8 81.1 65.0 79.5 64.8C77.9 64.6 76.4 62.6 75.3 61.2C74.2 59.7 73.1 57.8 73.0 56.0C73.0 54.2 73.9 51.9 75.0 50.4C76.1 49.0 77.9 47.7 79.5 47.6C81.1 47.4 83.6 48.3 84.6 49.8C85.5 51.2 85.1 53.9 85.1 56.0Z" stroke="#4a38a0" stroke-width="0.39" opacity="0.95"/><path d="M89.0 56.0L86.3 62.9L81.0 66.2L73.7 68.1L69.8 60.2L69.4 51.6L74.4 45.4L81.2 44.7L87.9 47.6Z" stroke="#2e2e78" stroke-width="0.32" opacity="0.95"/><path d="M93.5 56.0C93.2 59.3 92.2 62.4 90.6 64.9C89.0 67.4 86.5 70.3 83.9 71.1C81.4 72.0 78.3 70.8 75.4 70.0C72.5 69.2 67.8 68.8 66.5 66.5C65.2 64.1 67.3 59.2 67.6 56.0C67.9 52.8 67.2 49.8 68.4 47.1C69.6 44.3 72.1 40.6 74.7 39.6C77.3 38.5 81.0 39.6 84.0 40.6C87.1 41.5 91.3 42.7 92.8 45.3C94.4 47.8 93.9 52.7 93.5 56.0Z" stroke="#4a38a0" stroke-width="0.37" opacity="0.95"/><path d="M118.5 21.0C118.4 22.8 117.4 24.5 116.4 25.9C115.4 27.4 113.7 29.5 112.4 29.4C111.1 29.4 109.6 27.2 108.5 25.8C107.4 24.4 105.9 22.7 105.8 21.0C105.7 19.3 106.9 16.7 108.0 15.6C109.1 14.5 110.9 14.3 112.4 14.3C113.9 14.2 116.0 14.2 117.0 15.3C118.0 16.4 118.6 19.2 118.5 21.0Z" stroke="#4a38a0" stroke-width="0.39" opacity="0.95"/><path d="M121.5 21.0L120.0 28.7L113.8 30.8L107.7 30.7L104.6 24.4L104.8 17.7L107.8 11.5L113.9 11.0L119.5 13.9Z" stroke="#2e2e78" stroke-width="0.32" opacity="0.95"/><path d="M126.4 21.0C127.0 24.0 127.2 29.5 125.5 31.5C123.8 33.6 118.8 32.5 115.9 33.1C113.1 33.6 110.4 35.7 108.3 35.0C106.2 34.2 105.1 30.6 103.3 28.3C101.5 26.0 97.6 23.5 97.5 21.0C97.4 18.5 100.8 15.4 102.6 13.1C104.4 10.9 106.0 9.0 108.4 7.5C110.9 6.0 115.2 3.2 117.3 4.2C119.5 5.2 120.0 10.9 121.5 13.7C123.0 16.5 125.7 18.0 126.4 21.0Z" stroke="#4a38a0" stroke-width="0.37" opacity="0.95"/><path d="M118.3 56.0C118.5 57.9 118.7 61.4 117.8 62.6C116.8 63.8 114.1 63.0 112.4 62.9C110.7 62.8 108.4 63.2 107.5 62.1C106.5 60.9 106.7 57.9 106.9 56.0C107.0 54.1 107.3 52.4 108.2 50.9C109.1 49.3 111.0 46.5 112.4 46.6C113.8 46.6 115.5 49.4 116.5 50.9C117.5 52.5 118.1 54.1 118.3 56.0Z" stroke="#4a38a0" stroke-width="0.39" opacity="0.95"/><path d="M124.0 56.0L119.8 63.4L114.2 68.2L106.7 67.9L104.0 59.7L102.9 51.9L107.2 45.3L114.4 42.1L118.6 49.7Z" stroke="#2e2e78" stroke-width="0.32" opacity="0.95"/><path d="M127.8 56.0C128.0 59.5 127.8 64.8 125.8 66.8C123.8 68.7 118.6 67.6 115.8 67.7C113.1 67.9 111.9 67.6 109.0 67.5C106.1 67.4 100.2 69.0 98.6 67.1C97.0 65.2 98.9 59.2 99.5 56.0C100.2 52.8 101.2 50.6 102.6 48.1C104.0 45.6 105.7 42.5 108.1 41.3C110.4 40.1 114.0 40.1 116.8 40.9C119.6 41.7 123.1 43.4 124.9 45.9C126.8 48.4 127.7 52.5 127.8 56.0Z" stroke="#4a38a0" stroke-width="0.37" opacity="0.95"/><path d="M149.6 21.0C149.6 23.0 149.9 25.7 148.9 27.1C148.0 28.5 145.7 29.4 144.0 29.4C142.3 29.5 139.7 29.0 138.7 27.6C137.7 26.1 137.8 23.0 138.0 21.0C138.2 19.0 138.8 17.3 139.8 15.8C140.8 14.4 142.5 12.5 144.0 12.3C145.5 12.2 147.9 13.6 148.9 15.0C149.8 16.5 149.6 19.0 149.6 21.0Z" stroke="#4a38a0" stroke-width="0.39" opacity="0.95"/><path d="M154.0 21.0L150.9 28.0L145.8 33.5L139.5 30.3L134.7 25.1L132.8 16.1L139.8 12.3L145.6 10.0L152.2 12.7Z" stroke="#2e2e78" stroke-width="0.32" opacity="0.95"/><path d="M159.8 21.0C159.1 23.9 154.8 25.4 153.0 28.2C151.2 31.1 151.1 36.9 149.0 37.9C146.8 39.0 142.3 36.2 140.0 34.6C137.7 32.9 136.3 30.4 135.1 28.2C133.9 25.9 133.1 23.7 132.7 21.0C132.2 18.3 131.5 14.5 132.7 11.9C133.8 9.3 136.7 6.7 139.4 5.4C142.1 4.1 146.0 3.3 148.9 4.2C151.9 5.0 155.1 7.8 156.9 10.6C158.7 13.4 160.4 18.1 159.8 21.0Z" stroke="#4a38a0" stroke-width="0.37" opacity="0.95"/><path d="M151.6 56.0C151.4 57.8 149.1 59.2 147.8 60.7C146.5 62.1 145.3 64.6 144.0 64.7C142.7 64.7 141.2 62.4 140.0 61.0C138.7 59.5 136.3 57.6 136.4 56.0C136.4 54.4 138.9 52.8 140.2 51.3C141.5 49.8 142.6 47.1 144.0 46.9C145.4 46.7 147.6 48.5 148.9 50.0C150.2 51.5 151.8 54.2 151.6 56.0Z" stroke="#4a38a0" stroke-width="0.39" opacity="0.95"/><path d="M153.0 56.0L151.7 63.7L145.5 66.2L138.4 67.7L135.6 59.7L134.4 51.8L138.1 43.8L145.7 44.7L153.1 46.8Z" stroke="#2e2e78" stroke-width="0.32" opacity="0.95"/><path d="M155.8 56.0C155.9 58.6 154.9 61.0 153.8 63.9C152.6 66.7 151.3 71.8 149.0 72.9C146.6 74.1 142.1 72.5 139.6 71.0C137.1 69.6 135.2 66.7 133.8 64.2C132.3 61.7 131.2 58.9 131.0 56.0C130.8 53.1 131.0 49.0 132.5 46.7C134.0 44.4 137.3 43.5 140.0 42.4C142.7 41.2 146.5 38.9 148.7 39.9C151.0 40.9 152.3 45.7 153.4 48.4C154.6 51.1 155.8 53.4 155.8 56.0Z" stroke="#4a38a0" stroke-width="0.37" opacity="0.95"/><path d="M154.2 38.0C154.6 41.9 154.9 46.4 152.9 49.9C151.0 53.5 146.4 56.6 142.5 59.5C138.5 62.3 134.2 65.4 129.1 67.1C124.0 68.8 117.5 70.0 112.0 69.6C106.5 69.2 101.1 66.6 96.3 64.6C91.6 62.7 87.8 60.6 83.3 58.2C78.8 55.9 71.4 53.9 69.2 50.5C66.9 47.1 69.0 42.0 69.7 38.0C70.3 34.0 71.6 30.6 73.1 26.6C74.5 22.7 74.7 17.2 78.4 14.3C82.1 11.5 89.6 11.0 95.2 9.5C100.8 8.0 106.4 5.3 112.0 5.3C117.6 5.3 123.5 7.8 128.8 9.5C134.1 11.2 140.2 12.7 143.8 15.6C147.4 18.5 148.7 23.1 150.4 26.8C152.1 30.5 153.7 34.1 154.2 38.0Z" stroke="#4a38a0" stroke-width="0.41" opacity="0.95"/><path d="M159.7 38.0L157.4 49.6L149.3 60.0L136.7 68.1L120.4 71.4L103.4 72.1L89.8 65.0L76.1 59.1L65.5 49.9L64.2 38.0L65.7 26.2L77.7 17.8L88.6 9.5L104.1 6.5L120.2 5.3L135.7 9.2L145.9 18.0L154.7 27.1Z" stroke="#4a38a0" stroke-width="0.37" opacity="0.95"/><path d="M151.6 38.0C151.5 41.8 149.6 46.1 146.8 49.3C143.9 52.5 138.6 54.0 134.4 57.0C130.3 59.9 126.8 66.4 121.8 67.0C116.8 67.6 110.1 62.0 104.3 60.7C98.5 59.4 92.4 60.7 87.0 59.1C81.6 57.5 73.7 54.5 71.9 51.0C70.2 47.5 76.1 42.2 76.7 38.0C77.3 33.8 73.8 29.7 75.4 26.1C77.0 22.5 81.4 18.0 86.2 16.2C91.1 14.4 98.5 15.7 104.2 15.1C110.0 14.5 114.9 12.5 120.6 12.6C126.3 12.7 133.9 13.4 138.4 15.7C142.9 18.0 145.4 22.7 147.6 26.4C149.8 30.2 151.7 34.2 151.6 38.0Z" stroke="#2e2e78" stroke-width="0.32" opacity="0.95"/><path d="M66.0 8.0L72.0 5.0L80.0 12.0L74.0 22.0L67.0 20.0Z" stroke="#4a38a0" stroke-width="0.37" opacity="0.95"/><path d="M150.0 8.0L160.0 6.0L161.0 22.0L152.0 24.0L147.0 15.0Z" stroke="#4a38a0" stroke-width="0.37" opacity="0.95"/><path d="M150.0 12.0L158.0 10.0L158.0 30.0L150.0 30.0Z" stroke="#2e2e78" stroke-width="0.32" opacity="0.95"/><path d="M28.5 47.0C28.7 48.4 27.6 50.4 25.9 51.5C24.2 52.6 20.9 53.5 18.2 53.7C15.5 54.0 12.0 53.7 9.6 53.0C7.3 52.2 5.2 50.7 4.1 49.3C3.0 47.9 2.2 45.8 3.2 44.5C4.2 43.2 7.4 42.2 10.0 41.4C12.5 40.6 15.9 39.5 18.3 39.8C20.8 40.1 22.8 42.0 24.5 43.2C26.2 44.4 28.2 45.6 28.5 47.0Z" stroke="#4a38a0" stroke-width="0.35" opacity="0.95"/><path d="M26.1 48.0C26.3 49.0 25.4 50.6 23.7 51.5C22.0 52.3 18.4 53.2 16.0 53.1C13.6 53.0 11.2 51.8 9.4 51.0C7.6 50.1 5.3 49.1 5.2 48.0C5.1 46.9 6.7 45.4 8.5 44.6C10.3 43.8 13.7 43.2 16.0 43.3C18.3 43.4 20.6 44.4 22.2 45.2C23.9 46.0 25.8 47.0 26.1 48.0Z" stroke="#a84040" stroke-width="0.32" opacity="0.95"/><path d="M24.7 14.0L22.6 20.7L13.9 21.3L8.1 17.1L7.0 10.5L13.8 6.2L22.2 7.8Z" stroke="#4a38a0" stroke-width="0.32" opacity="0.95"/><path d="M59.4 47.0C59.6 48.4 58.4 50.3 56.8 51.4C55.1 52.5 51.9 53.6 49.2 53.8C46.6 54.0 43.2 53.5 40.8 52.8C38.4 52.0 35.7 50.8 34.7 49.4C33.8 48.1 34.1 46.0 35.2 44.7C36.3 43.4 39.1 42.5 41.4 41.8C43.7 41.0 46.8 40.0 49.2 40.3C51.6 40.5 53.8 42.0 55.5 43.1C57.2 44.3 59.2 45.6 59.4 47.0Z" stroke="#4a38a0" stroke-width="0.35" opacity="0.95"/><path d="M57.1 48.0C57.1 48.9 55.0 50.0 53.3 50.8C51.6 51.6 49.2 52.8 47.0 52.8C44.8 52.8 42.2 51.8 40.3 51.0C38.5 50.2 35.6 49.0 35.7 48.0C35.7 47.0 38.7 45.9 40.6 45.1C42.5 44.3 44.9 43.1 47.0 43.1C49.1 43.2 51.7 44.3 53.4 45.1C55.1 45.9 57.2 47.1 57.1 48.0Z" stroke="#a84040" stroke-width="0.32" opacity="0.95"/><path d="M55.3 14.0L53.0 20.0L45.1 20.6L37.1 17.8L37.9 10.5L45.2 7.6L52.1 8.9Z" stroke="#4a38a0" stroke-width="0.32" opacity="0.95"/><path d="M6 44 H57 V56 H6Z" stroke="#4a38a0" stroke-width="0.28" opacity="0.95"/><path d="M8 49 H55" stroke="#a84040" stroke-width="0.32" opacity="0.95"/><path d="M42.3 64.0C42.2 65.2 39.5 66.5 37.8 67.2C36.1 68.0 34.2 68.2 32.0 68.4C29.8 68.5 25.8 68.8 24.6 68.1C23.4 67.4 24.5 65.3 24.7 64.0C24.9 62.7 24.5 61.4 25.7 60.5C26.9 59.6 29.8 58.9 32.0 58.9C34.2 58.8 37.0 59.4 38.7 60.3C40.4 61.1 42.5 62.8 42.3 64.0Z" stroke="#a84040" stroke-width="0.32" opacity="0.95"/><path d="M47.7 89.5C47.7 91.5 47.6 93.8 45.7 95.6C43.8 97.4 40.1 99.5 36.3 100.2C32.6 101.0 27.1 100.8 23.2 100.1C19.2 99.4 14.7 97.8 12.5 96.1C10.3 94.3 10.1 91.7 10.1 89.5C10.0 87.3 9.9 84.5 12.2 82.8C14.4 81.1 19.6 79.8 23.5 79.4C27.3 79.1 31.5 80.0 35.2 80.7C38.9 81.4 43.6 81.9 45.7 83.4C47.8 84.9 47.7 87.5 47.7 89.5Z" stroke="#2e2e78" stroke-width="0.39" opacity="0.95"/><path d="M53.9 90.5L48.4 97.5L40.4 104.2L26.0 105.7L13.2 101.6L10.2 93.8L8.6 86.9L14.8 80.5L25.8 74.5L40.2 77.1L50.1 82.9Z" stroke="#4a38a0" stroke-width="0.32" opacity="0.95"/><path d="M50.2 149.3C49.8 151.3 46.7 153.1 44.5 154.9C42.3 156.8 40.3 159.7 36.7 160.6C33.1 161.5 26.6 161.3 22.8 160.5C18.9 159.6 16.0 157.3 13.7 155.4C11.3 153.6 8.6 151.3 8.8 149.3C9.0 147.3 12.3 145.2 14.8 143.6C17.3 142.1 20.6 140.7 24.0 140.1C27.5 139.5 31.7 139.5 35.5 139.9C39.3 140.4 44.3 141.2 46.8 142.8C49.2 144.4 50.5 147.3 50.2 149.3Z" stroke="#2e2e78" stroke-width="0.39" opacity="0.95"/><path d="M47.7 208.5C47.8 210.6 48.5 213.4 46.4 214.9C44.3 216.4 39.2 216.9 35.3 217.6C31.4 218.3 26.9 219.5 23.2 219.1C19.4 218.6 15.2 216.6 13.0 214.9C10.9 213.1 10.4 210.6 10.3 208.5C10.3 206.4 10.8 203.8 13.0 202.1C15.2 200.4 19.7 198.7 23.4 198.3C27.1 197.9 31.3 199.1 35.1 199.8C38.9 200.4 43.9 200.8 46.0 202.3C48.1 203.7 47.7 206.4 47.7 208.5Z" stroke="#2e2e78" stroke-width="0.39" opacity="0.95"/><path d="M53.0 209.5L49.3 216.8L40.9 223.9L25.8 225.1L15.0 219.4L4.1 213.9L3.3 205.0L12.3 197.8L26.8 197.7L41.2 194.8L48.3 202.5Z" stroke="#4a38a0" stroke-width="0.32" opacity="0.95"/><path d="M105.1 89.5C104.8 91.7 101.1 93.8 98.4 95.6C95.7 97.4 92.7 99.3 89.0 100.1C85.2 100.9 79.4 101.0 75.8 100.1C72.2 99.3 69.4 97.0 67.5 95.2C65.7 93.4 65.1 91.5 64.8 89.5C64.5 87.5 63.7 84.6 65.8 83.2C67.8 81.7 73.1 81.1 76.9 80.6C80.6 80.0 84.5 79.5 88.4 79.8C92.3 80.2 97.6 81.0 100.3 82.7C103.1 84.3 105.4 87.3 105.1 89.5Z" stroke="#2e2e78" stroke-width="0.39" opacity="0.95"/><path d="M105.0 149.3C105.0 151.6 102.9 154.3 100.3 156.1C97.6 157.9 92.9 159.5 89.0 159.9C85.1 160.3 80.4 159.3 76.7 158.5C73.0 157.7 69.6 156.7 67.0 155.2C64.4 153.6 61.6 151.4 61.2 149.3C60.8 147.2 62.2 144.0 64.8 142.6C67.5 141.2 73.2 141.1 77.1 140.7C80.9 140.3 84.1 139.9 88.0 140.2C91.9 140.5 97.5 140.9 100.4 142.4C103.2 144.0 105.0 147.0 105.0 149.3Z" stroke="#2e2e78" stroke-width="0.39" opacity="0.95"/><path d="M106.3 150.3L100.6 157.1L93.9 165.0L78.5 166.0L65.4 161.7L56.9 154.7L62.9 147.0L65.4 138.8L79.4 138.2L92.0 138.0L102.5 142.8Z" stroke="#4a38a0" stroke-width="0.32" opacity="0.95"/><path d="M104.5 208.5C104.2 210.6 100.5 212.6 97.9 214.4C95.3 216.2 92.8 218.4 89.1 219.3C85.3 220.2 79.1 220.6 75.4 219.7C71.8 218.9 69.5 216.2 67.1 214.3C64.6 212.5 60.9 210.5 60.9 208.5C60.9 206.5 64.3 204.1 67.0 202.6C69.6 201.1 73.2 200.1 76.8 199.5C80.4 198.8 84.5 198.5 88.3 198.9C92.1 199.3 97.0 200.3 99.7 201.9C102.4 203.5 104.8 206.4 104.5 208.5Z" stroke="#2e2e78" stroke-width="0.39" opacity="0.95"/><path d="M157.0 89.5C156.9 91.8 156.4 94.9 153.8 96.4C151.2 97.8 145.3 97.4 141.1 98.1C137.0 98.9 132.7 101.0 128.9 100.7C125.0 100.4 119.9 98.1 118.2 96.2C116.4 94.4 118.3 91.7 118.3 89.5C118.3 87.3 116.4 84.6 118.2 82.8C120.0 81.0 125.2 79.1 129.1 78.7C133.0 78.3 137.3 79.7 141.4 80.4C145.6 81.0 151.5 81.0 154.1 82.5C156.7 84.0 157.0 87.2 157.0 89.5Z" stroke="#2e2e78" stroke-width="0.39" opacity="0.95"/><path d="M160.4 90.5L156.2 98.1L145.6 103.0L132.1 105.5L120.5 100.8L115.4 94.0L111.8 86.4L122.4 81.5L131.8 74.4L146.4 76.9L153.1 84.0Z" stroke="#4a38a0" stroke-width="0.32" opacity="0.95"/><path d="M154.4 149.3C154.6 151.3 154.3 153.7 152.3 155.6C150.4 157.5 146.6 159.9 142.8 160.6C139.0 161.3 133.2 160.6 129.3 159.7C125.5 158.9 121.8 157.2 119.7 155.4C117.6 153.7 116.6 151.2 116.9 149.3C117.1 147.4 119.3 145.7 121.3 143.8C123.2 141.9 125.2 138.8 128.8 137.9C132.3 137.1 138.7 137.7 142.4 138.6C146.1 139.5 148.9 141.8 150.8 143.6C152.8 145.3 154.1 147.3 154.4 149.3Z" stroke="#2e2e78" stroke-width="0.39" opacity="0.95"/><path d="M153.7 208.5C153.7 210.8 155.3 213.4 153.4 215.2C151.6 217.1 146.6 219.1 142.6 219.5C138.7 220.0 133.5 219.0 129.8 218.2C126.2 217.3 122.7 215.9 120.6 214.3C118.6 212.7 117.4 210.4 117.5 208.5C117.7 206.6 119.4 204.6 121.5 203.1C123.6 201.5 126.8 199.9 130.1 199.3C133.4 198.7 137.6 198.9 141.5 199.3C145.4 199.7 151.5 200.2 153.6 201.7C155.6 203.2 153.8 206.2 153.7 208.5Z" stroke="#2e2e78" stroke-width="0.39" opacity="0.95"/><path d="M157.4 209.5L155.7 216.9L146.4 223.0L132.7 222.1L118.3 221.3L114.6 213.1L115.4 206.0L120.4 199.1L132.6 196.3L146.5 195.9L158.9 200.9Z" stroke="#4a38a0" stroke-width="0.32" opacity="0.95"/><path d="M135.4 108.0C135.8 110.7 139.3 114.1 137.0 116.4C134.8 118.7 126.3 120.0 122.0 122.1C117.6 124.2 115.6 126.7 110.8 129.0C106.1 131.2 100.4 134.6 93.6 135.7C86.9 136.7 77.6 136.1 70.6 135.2C63.5 134.3 58.0 131.8 51.3 130.3C44.6 128.8 35.1 128.3 30.6 126.1C26.2 123.8 27.6 119.8 24.7 116.8C21.7 113.7 13.3 111.0 12.8 108.0C12.3 105.0 17.2 101.3 21.7 98.8C26.2 96.3 35.2 95.5 40.0 93.2C44.8 90.9 45.1 86.8 50.3 85.0C55.6 83.2 64.2 83.1 71.3 82.6C78.4 82.1 86.4 81.3 92.9 82.1C99.4 82.9 103.6 86.2 110.2 87.5C116.8 88.9 128.4 88.2 132.5 90.2C136.5 92.3 134.0 97.0 134.5 100.0C135.0 103.0 135.0 105.3 135.4 108.0Z" stroke="#2e2e78" stroke-width="0.37" opacity="0.95"/><path d="M159.9 120.0C159.7 124.3 157.6 128.9 154.4 132.7C151.2 136.6 146.0 140.1 140.8 143.1C135.5 146.0 128.7 147.7 122.9 150.4C117.0 153.1 112.5 157.2 105.7 159.4C98.9 161.6 89.7 164.1 82.0 163.8C74.3 163.4 67.2 159.0 59.5 157.5C51.7 156.0 40.7 157.3 35.5 154.6C30.2 151.9 31.7 145.0 27.7 141.3C23.7 137.6 13.8 136.0 11.2 132.4C8.7 128.9 12.3 124.1 12.4 120.0C12.5 115.9 10.3 111.7 11.7 107.7C13.1 103.6 16.8 99.7 20.8 96.0C24.8 92.2 29.0 87.7 35.4 85.3C41.8 83.0 51.3 83.2 59.0 81.8C66.8 80.4 74.5 76.8 82.0 77.0C89.5 77.3 97.4 81.1 104.1 83.3C110.8 85.4 116.0 87.8 122.3 90.0C128.5 92.3 135.9 93.8 141.4 96.7C147.0 99.5 152.3 103.2 155.4 107.1C158.5 111.0 160.1 115.7 159.9 120.0Z" stroke="#4a38a0" stroke-width="0.35" opacity="0.95"/><path d="M144.0 180.0C146.0 183.7 155.6 188.6 155.0 192.2C154.3 195.8 146.1 199.3 140.2 201.8C134.4 204.2 125.7 204.3 119.8 206.8C114.0 209.3 111.6 215.2 105.3 216.9C99.0 218.6 89.8 216.9 82.0 217.0C74.2 217.0 65.5 218.5 58.4 217.4C51.3 216.2 45.7 212.5 39.6 210.0C33.5 207.6 26.7 205.5 21.8 202.5C17.0 199.5 11.4 195.7 10.3 192.0C9.2 188.2 12.9 183.6 15.1 180.0C17.2 176.4 22.3 174.1 23.0 170.1C23.6 166.2 15.3 159.2 19.1 156.5C22.8 153.8 38.4 155.9 45.3 154.0C52.1 152.1 53.9 147.7 60.0 145.2C66.1 142.7 74.9 138.7 82.0 139.0C89.1 139.4 96.3 144.9 102.7 147.2C109.1 149.5 114.7 150.8 120.4 152.8C126.1 154.9 133.0 156.7 136.8 159.5C140.5 162.4 141.8 166.4 143.0 169.8C144.2 173.2 142.0 176.3 144.0 180.0Z" stroke="#2e2e78" stroke-width="0.37" opacity="0.95"/><path d="M156.1 205.0C155.3 207.5 149.1 209.5 147.7 212.1C146.2 214.7 150.6 218.4 147.2 220.4C143.8 222.5 133.0 222.6 127.4 224.3C121.8 225.9 119.3 229.1 113.4 230.4C107.6 231.6 99.5 231.0 92.4 231.6C85.3 232.2 77.2 234.6 70.7 234.0C64.1 233.5 60.4 229.3 53.0 228.4C45.7 227.5 31.4 230.2 26.6 228.5C21.9 226.9 26.3 221.3 24.6 218.6C23.0 215.8 20.3 214.3 16.6 212.1C13.0 209.8 5.5 207.6 2.8 205.0C0.1 202.4 -1.0 198.9 0.6 196.2C2.2 193.5 7.9 190.9 12.5 188.5C17.1 186.2 21.6 183.3 28.4 182.2C35.1 181.0 45.8 182.1 53.1 181.7C60.3 181.2 65.4 179.8 72.0 179.3C78.5 178.8 85.7 178.3 92.3 178.7C98.9 179.0 105.7 180.0 111.6 181.1C117.5 182.3 122.6 183.9 127.8 185.5C133.1 187.1 138.8 188.6 142.9 190.6C147.1 192.5 150.6 194.9 152.8 197.3C155.0 199.7 157.0 202.5 156.1 205.0Z" stroke="#4a38a0" stroke-width="0.35" opacity="0.95"/><path d="M85.2 195.0C84.8 200.7 86.6 207.0 84.3 211.3C82.0 215.7 75.9 219.1 71.2 221.4C66.5 223.6 61.4 224.5 56.0 225.0C50.6 225.5 42.9 227.2 39.0 224.4C35.2 221.6 36.0 213.2 32.9 208.4C29.8 203.5 20.8 199.7 20.3 195.0C19.8 190.3 26.0 183.5 29.8 179.9C33.7 176.3 39.0 176.1 43.4 173.2C47.8 170.2 51.7 162.4 56.0 162.1C60.3 161.9 64.2 169.3 69.4 171.8C74.5 174.3 84.3 173.3 86.9 177.2C89.5 181.0 85.6 189.3 85.2 195.0Z" stroke="#2e2e78" stroke-width="0.35" opacity="0.95"/><path d="M137.7 200.0C136.9 204.7 138.9 208.5 137.6 212.9C136.2 217.3 133.8 223.4 129.5 226.5C125.3 229.7 118.0 231.6 112.0 231.8C106.0 232.1 99.0 230.6 93.5 228.1C88.0 225.6 80.6 221.3 79.1 216.6C77.5 212.0 82.7 204.9 84.0 200.0C85.3 195.1 85.0 191.4 86.9 187.3C88.9 183.3 91.7 178.3 95.8 175.5C100.0 172.7 107.0 169.8 112.0 170.3C117.0 170.9 121.0 176.3 126.0 178.7C131.1 181.1 140.4 181.1 142.4 184.6C144.3 188.2 138.5 195.3 137.7 200.0Z" stroke="#2e2e78" stroke-width="0.35" opacity="0.95"/><path d="M15.8 110.0C15.8 112.7 14.0 116.0 12.8 118.3C11.7 120.7 10.4 123.9 9.0 124.1C7.6 124.3 5.9 121.7 4.7 119.3C3.6 116.9 2.1 113.1 2.1 110.0C2.1 106.9 3.5 102.8 4.7 100.7C5.8 98.5 7.7 97.0 9.0 97.3C10.3 97.5 11.6 99.8 12.7 102.0C13.8 104.1 15.7 107.3 15.8 110.0Z" stroke="#4a38a0" stroke-width="0.35" opacity="0.95"/><path d="M13.0 110.0L11.3 116.4L8.0 120.0L5.2 114.1L5.3 106.0L8.0 100.1L11.2 103.8Z" stroke="#2e2e78" stroke-width="0.29" opacity="0.95"/><path d="M11.1 110.0C11.1 111.8 10.8 114.5 10.2 115.3C9.7 116.2 8.5 115.9 7.8 115.0C7.2 114.1 6.3 111.7 6.3 110.0C6.3 108.3 7.1 105.5 7.8 104.6C8.4 103.8 9.7 103.9 10.2 104.8C10.8 105.7 11.1 108.2 11.1 110.0Z" stroke="#a84040" stroke-width="0.29" opacity="0.95"/><path d="M162.8 110.0C162.9 112.9 161.4 117.0 160.3 119.3C159.2 121.6 157.4 123.7 156.0 123.7C154.6 123.6 152.7 121.3 151.8 119.0C150.9 116.8 150.5 113.0 150.5 110.0C150.6 107.0 151.0 103.4 151.9 101.1C152.8 98.9 154.7 96.5 156.0 96.6C157.3 96.8 158.5 99.8 159.7 102.0C160.8 104.3 162.7 107.1 162.8 110.0Z" stroke="#4a38a0" stroke-width="0.35" opacity="0.95"/><path d="M159.6 110.0L158.5 116.9L155.2 118.4L152.8 113.4L152.3 106.0L155.2 102.4L158.6 102.7Z" stroke="#2e2e78" stroke-width="0.29" opacity="0.95"/><path d="M158.6 110.0C158.6 111.8 157.8 114.4 157.2 115.2C156.6 116.1 155.5 115.8 154.9 114.9C154.2 114.0 153.4 111.8 153.4 110.0C153.4 108.2 154.0 105.2 154.7 104.3C155.3 103.3 156.6 103.5 157.3 104.5C157.9 105.4 158.6 108.2 158.6 110.0Z" stroke="#a84040" stroke-width="0.29" opacity="0.95"/><path d="M15.7 170.0C15.6 173.1 14.0 176.0 12.9 178.4C11.7 180.7 10.3 184.3 9.0 184.3C7.7 184.2 6.3 180.4 5.3 178.0C4.3 175.6 3.1 172.8 3.0 170.0C2.9 167.2 3.8 162.8 4.8 161.0C5.8 159.1 7.5 158.9 9.0 158.8C10.5 158.6 12.5 158.1 13.6 160.0C14.8 161.8 15.9 166.9 15.7 170.0Z" stroke="#4a38a0" stroke-width="0.35" opacity="0.95"/><path d="M12.6 170.0L11.6 177.4L8.1 179.1L5.8 173.5L5.4 166.1L8.2 161.9L11.1 163.9Z" stroke="#2e2e78" stroke-width="0.29" opacity="0.95"/><path d="M11.5 170.0C11.4 171.6 10.7 173.8 10.1 174.6C9.5 175.4 8.4 175.7 7.9 174.9C7.3 174.2 6.7 171.6 6.7 170.0C6.7 168.4 7.3 166.1 7.9 165.3C8.5 164.5 9.5 164.3 10.1 165.1C10.7 165.9 11.5 168.4 11.5 170.0Z" stroke="#a84040" stroke-width="0.29" opacity="0.95"/><path d="M161.3 170.0C161.2 173.0 160.9 176.3 160.0 178.7C159.1 181.0 157.4 184.1 156.0 184.2C154.6 184.2 153.0 181.3 151.9 178.9C150.7 176.6 149.1 172.8 149.2 170.0C149.2 167.2 151.1 163.9 152.3 161.9C153.4 159.9 154.7 158.1 156.0 157.9C157.3 157.7 159.4 158.8 160.3 160.8C161.1 162.8 161.3 167.0 161.3 170.0Z" stroke="#4a38a0" stroke-width="0.35" opacity="0.95"/><path d="M160.4 170.0L158.7 177.8L155.1 178.6L152.1 174.2L152.1 165.8L155.2 162.2L158.7 162.3Z" stroke="#2e2e78" stroke-width="0.29" opacity="0.95"/><path d="M158.5 170.0C158.5 171.8 157.9 174.7 157.3 175.6C156.7 176.4 155.5 176.1 154.8 175.1C154.2 174.2 153.4 171.8 153.4 170.0C153.4 168.2 154.1 165.3 154.7 164.4C155.3 163.5 156.6 163.7 157.2 164.6C157.9 165.5 158.5 168.2 158.5 170.0Z" stroke="#a84040" stroke-width="0.29" opacity="0.95"/><path d="M14.2 215.0C14.1 217.9 13.7 221.4 12.8 223.3C12.0 225.2 10.4 226.2 9.0 226.3C7.6 226.5 5.6 226.2 4.7 224.3C3.8 222.4 3.5 218.0 3.5 215.0C3.5 212.0 3.9 208.5 4.9 206.0C5.8 203.6 7.6 200.4 9.0 200.3C10.4 200.3 12.4 203.3 13.3 205.7C14.1 208.2 14.3 212.1 14.2 215.0Z" stroke="#4a38a0" stroke-width="0.35" opacity="0.95"/><path d="M13.2 215.0L11.3 221.5L8.0 224.4L4.9 219.4L5.2 210.9L8.2 207.0L11.8 207.2Z" stroke="#2e2e78" stroke-width="0.29" opacity="0.95"/><path d="M11.4 215.0C11.4 216.8 10.9 219.9 10.3 220.8C9.7 221.6 8.4 221.2 7.8 220.3C7.1 219.3 6.5 216.6 6.5 215.0C6.6 213.4 7.4 211.3 8.0 210.5C8.6 209.7 9.6 209.3 10.2 210.0C10.7 210.8 11.4 213.2 11.4 215.0Z" stroke="#a84040" stroke-width="0.29" opacity="0.95"/><path d="M161.7 215.0C161.6 218.2 161.1 221.7 160.1 224.0C159.2 226.2 157.5 228.2 156.0 228.4C154.5 228.7 152.3 227.7 151.2 225.5C150.0 223.2 149.0 218.2 149.1 215.0C149.3 211.8 150.8 208.8 152.0 206.3C153.1 203.8 154.6 200.3 156.0 200.1C157.4 199.8 159.7 202.5 160.6 205.0C161.6 207.4 161.7 211.8 161.7 215.0Z" stroke="#4a38a0" stroke-width="0.35" opacity="0.95"/><path d="M159.5 215.0L158.9 223.1L155.0 224.4L152.7 218.6L152.4 211.1L155.1 205.7L158.5 208.0Z" stroke="#2e2e78" stroke-width="0.29" opacity="0.95"/><path d="M158.1 215.0C158.1 216.9 157.9 219.9 157.3 220.8C156.8 221.7 155.3 221.5 154.7 220.6C154.1 219.6 153.8 216.7 153.9 215.0C153.9 213.3 154.3 211.2 154.9 210.3C155.5 209.4 156.7 208.8 157.2 209.6C157.8 210.4 158.0 213.1 158.1 215.0Z" stroke="#a84040" stroke-width="0.29" opacity="0.95"/><path d="M41.1 175.0C41.7 175.7 42.4 176.9 40.7 177.4C38.9 177.9 33.7 178.1 30.4 178.1C27.2 178.2 23.4 178.1 21.2 177.7C18.9 177.3 18.2 176.6 16.9 175.9C15.7 175.3 12.7 174.3 13.5 173.8C14.4 173.2 19.1 173.1 22.0 172.6C25.0 172.2 28.6 170.9 31.1 171.0C33.6 171.1 35.4 172.6 37.1 173.3C38.7 173.9 40.6 174.3 41.1 175.0Z" stroke="#a84040" stroke-width="0.33" opacity="0.95"/><path d="M120.5 175.0C120.2 175.8 115.5 176.7 112.5 177.3C109.6 177.9 106.3 178.4 102.9 178.6C99.5 178.7 94.6 178.4 92.1 178.0C89.6 177.6 88.3 176.6 87.8 176.0C87.3 175.3 88.4 174.8 89.1 174.1C89.9 173.5 90.2 172.6 92.5 172.2C94.8 171.7 99.2 171.5 102.8 171.5C106.4 171.6 111.3 171.8 114.3 172.4C117.2 173.0 120.8 174.2 120.5 175.0Z" stroke="#a84040" stroke-width="0.33" opacity="0.95"/><path d="M153.6 173.0C154.1 173.7 157.9 175.1 156.8 175.5C155.6 175.9 150.0 175.3 146.7 175.4C143.4 175.6 139.9 176.6 137.2 176.4C134.6 176.2 131.0 175.0 130.7 174.3C130.4 173.6 134.0 172.8 135.4 172.1C136.7 171.5 137.0 170.7 138.9 170.4C140.9 170.1 144.5 170.1 147.0 170.2C149.4 170.4 152.6 170.7 153.7 171.2C154.8 171.6 153.1 172.3 153.6 173.0Z" stroke="#a84040" stroke-width="0.33" opacity="0.95"/><path d="M109.4 113.0C109.5 113.6 109.9 114.2 108.8 114.8C107.6 115.4 105.0 116.5 102.5 116.6C100.1 116.7 96.2 116.0 94.2 115.5C92.2 115.1 91.6 114.5 90.5 113.9C89.4 113.3 86.9 112.4 87.6 111.9C88.3 111.3 92.3 111.0 94.7 110.7C97.1 110.4 100.0 109.8 102.2 109.9C104.4 110.0 106.5 110.9 107.7 111.4C108.9 111.9 109.2 112.4 109.4 113.0Z" stroke="#a84040" stroke-width="0.33" opacity="0.95"/><path d="M29.3 113.0C29.3 113.6 30.1 114.3 29.2 114.7C28.2 115.2 25.5 115.7 23.7 115.8C21.8 115.8 19.5 115.3 18.1 115.0C16.7 114.6 16.2 114.2 15.2 113.7C14.2 113.2 11.8 112.5 12.1 112.0C12.5 111.4 15.3 110.8 17.2 110.6C19.0 110.4 21.3 110.8 23.3 110.9C25.3 111.0 28.2 110.9 29.2 111.3C30.2 111.6 29.3 112.4 29.3 113.0Z" stroke="#a84040" stroke-width="0.33" opacity="0.95"/><path d="M49.5 228.0C49.3 228.9 49.0 230.1 47.3 230.6C45.7 231.1 42.4 231.0 39.7 231.2C37.0 231.4 32.9 232.4 31.1 232.0C29.2 231.7 29.7 230.1 28.7 229.1C27.7 228.2 24.6 227.2 25.2 226.4C25.8 225.7 29.9 225.3 32.4 224.8C35.0 224.3 37.6 223.6 40.3 223.6C43.0 223.7 47.2 224.3 48.7 225.0C50.3 225.7 49.7 227.1 49.5 228.0Z" stroke="#a84040" stroke-width="0.33" opacity="0.95"/><path d="M143.2 228.0C143.3 228.7 139.5 229.5 137.4 230.3C135.4 231.0 133.5 232.2 130.7 232.4C128.0 232.6 123.5 232.0 120.9 231.5C118.4 231.0 115.8 230.1 115.4 229.3C115.0 228.6 117.6 227.8 118.6 227.0C119.6 226.3 119.5 225.3 121.5 224.8C123.5 224.2 128.1 223.6 130.6 223.8C133.2 223.9 134.8 225.2 136.8 225.9C138.9 226.6 143.1 227.3 143.2 228.0Z" stroke="#a84040" stroke-width="0.33" opacity="0.95"/><path d="M92.1 228.0C92.2 229.1 94.9 230.7 93.8 231.3C92.7 231.9 88.2 231.5 85.6 231.6C83.0 231.7 79.7 232.5 78.1 232.1C76.5 231.7 76.4 230.1 75.9 229.2C75.4 228.3 74.6 227.6 75.0 226.7C75.3 225.8 76.1 224.4 77.9 223.8C79.8 223.2 83.6 222.9 86.2 223.1C88.8 223.3 92.4 224.0 93.4 224.8C94.4 225.6 92.1 226.9 92.1 228.0Z" stroke="#a84040" stroke-width="0.33" opacity="0.95"/><path d="M127.9 174.0C128.0 174.3 126.6 174.8 125.2 174.9C123.7 175.1 120.5 175.0 119.1 174.8C117.6 174.7 116.4 174.3 116.4 174.0C116.4 173.7 117.8 173.3 119.1 173.2C120.4 173.0 123.0 173.1 124.5 173.3C126.0 173.4 127.8 173.7 127.9 174.0Z" stroke="#4a38a0" stroke-width="0.28" opacity="0.95"/></g><circle cx="28" cy="7.3" r="2.3" fill="#169a16"/><circle cx="57.8" cy="7.3" r="2.3" fill="#169a16"/><circle cx="156.9" cy="7.9" r="2.3" fill="#169a16"/><circle cx="151" cy="14.9" r="2.3" fill="#169a16"/><circle cx="126.4" cy="40.2" r="2.3" fill="#169a16"/><circle cx="155.7" cy="80.5" r="2.3" fill="#169a16"/><circle cx="138" cy="98.8" r="2.3" fill="#169a16"/><circle cx="33" cy="110.3" r="2.3" fill="#169a16"/><circle cx="80.7" cy="126.3" r="2.3" fill="#169a16"/><circle cx="49.8" cy="154.7" r="2.3" fill="#169a16"/><circle cx="96.4" cy="171.5" r="2.3" fill="#169a16"/><circle cx="33.4" cy="194.5" r="2.3" fill="#169a16"/><circle cx="72" cy="214.9" r="2.3" fill="#169a16"/><path transform="translate(22 11.5) rotate(225)" d="M0 -1.9 L1.9 1.5 H-1.9Z" fill="#169a16"/><path transform="translate(56.8 14.9) rotate(180)" d="M0 -1.9 L1.9 1.5 H-1.9Z" fill="#169a16"/><path transform="translate(122.4 34.4) rotate(90)" d="M0 -1.9 L1.9 1.5 H-1.9Z" fill="#169a16"/><path transform="translate(93.6 78.2) rotate(180)" d="M0 -1.9 L1.9 1.5 H-1.9Z" fill="#169a16"/><path transform="translate(150.5 85.2) rotate(0)" d="M0 -1.9 L1.9 1.5 H-1.9Z" fill="#169a16"/><path transform="translate(134.6 105.5) rotate(90)" d="M0 -1.9 L1.9 1.5 H-1.9Z" fill="#169a16"/><path transform="translate(32.7 118) rotate(180)" d="M0 -1.9 L1.9 1.5 H-1.9Z" fill="#169a16"/><path transform="translate(81 133.4) rotate(180)" d="M0 -1.9 L1.9 1.5 H-1.9Z" fill="#169a16"/><path transform="translate(57 154) rotate(90)" d="M0 -1.9 L1.9 1.5 H-1.9Z" fill="#169a16"/><path transform="translate(92.4 165.5) rotate(90)" d="M0 -1.9 L1.9 1.5 H-1.9Z" fill="#169a16"/><path transform="translate(33.4 186.5) rotate(0)" d="M0 -1.9 L1.9 1.5 H-1.9Z" fill="#169a16"/><path transform="translate(72.5 206.5) rotate(0)" d="M0 -1.9 L1.9 1.5 H-1.9Z" fill="#169a16"/><path transform="translate(147.5 11) rotate(0)" d="M0 -1.9 L1.9 1.5 H-1.9Z" fill="#169a16"/><g stroke="#4c9a4c" stroke-width="0.3" fill="none"><circle cx="9.7" cy="26.1" r="3"/><path d="M6.699999999999999 26.1 H12.7 M9.7 23.1 V29.1"/></g><g stroke="#4c9a4c" stroke-width="0.3" fill="none"><circle cx="53.7" cy="26.1" r="3"/><path d="M50.7 26.1 H56.7 M53.7 23.1 V29.1"/></g><g stroke="#4c9a4c" stroke-width="0.3" fill="none"><circle cx="57" cy="80.1" r="3"/><path d="M54 80.1 H60 M57 77.1 V83.1"/></g><g stroke="#4c9a4c" stroke-width="0.3" fill="none"><circle cx="94.8" cy="41.9" r="3"/><path d="M91.8 41.9 H97.8 M94.8 38.9 V44.9"/></g><g stroke="#4c9a4c" stroke-width="0.3" fill="none"><circle cx="65" cy="175" r="3"/><path d="M62 175 H68 M65 172 V178"/></g><g stroke="#4c9a4c" stroke-width="0.3" fill="none"><circle cx="12" cy="103" r="3"/><path d="M9 103 H15 M12 100 V106"/></g><g stroke="#4c9a4c" stroke-width="0.3" fill="none"><circle cx="78" cy="110" r="3"/><path d="M75 110 H81 M78 107 V113"/></g><g stroke="#4c9a4c" stroke-width="0.3" fill="none"><circle cx="24.5" cy="156.5" r="3"/><path d="M21.5 156.5 H27.5 M24.5 153.5 V159.5"/></g><g stroke="#4c9a4c" stroke-width="0.3" fill="none"><circle cx="103" cy="156" r="3"/><path d="M100 156 H106 M103 153 V159"/></g><g stroke="#4c9a4c" stroke-width="0.3" fill="none"><circle cx="83.5" cy="186" r="3"/><path d="M80.5 186 H86.5 M83.5 183 V189"/></g><g stroke="#4c9a4c" stroke-width="0.3" fill="none"><circle cx="143" cy="185" r="3"/><path d="M140 185 H146 M143 182 V188"/></g><g stroke="#4c9a4c" stroke-width="0.3" fill="none"><circle cx="20" cy="199" r="3"/><path d="M17 199 H23 M20 196 V202"/></g><g stroke="#4c9a4c" stroke-width="0.3" fill="none"><circle cx="11" cy="227" r="3"/><path d="M8 227 H14 M11 224 V230"/></g><g stroke="#4c9a4c" stroke-width="0.3" fill="none"><circle cx="67" cy="217" r="3"/><path d="M64 217 H70 M67 214 V220"/></g><g stroke="#4c9a4c" stroke-width="0.3" fill="none"><circle cx="155" cy="227" r="3"/><path d="M152 227 H158 M155 224 V230"/></g><g stroke="#4c9a4c" stroke-width="0.3" fill="none"><circle cx="137.5" cy="28" r="3"/><path d="M134.5 28 H140.5 M137.5 25 V31"/></g><g stroke="#4c9a4c" stroke-width="0.3" fill="none"><circle cx="25" cy="49" r="3"/><path d="M22 49 H28 M25 46 V52"/></g><g stroke="#4c9a4c" stroke-width="0.3" fill="none"><circle cx="33" cy="49" r="3"/><path d="M30 49 H36 M33 46 V52"/></g><g stroke="#4c9a4c" stroke-width="0.3" fill="none"><circle cx="8.5" cy="64" r="3"/><path d="M5.5 64 H11.5 M8.5 61 V67"/></g></g></svg>
<div class="a" style="left:329.5px;top:189.2px;font-size:4.1px;line-height:5.1px;color:#1a1a2a;-webkit-text-stroke:0.15px currentColor;">Toilet Women</div>
<div class="a" style="left:363.0px;top:189.2px;font-size:4.1px;line-height:5.1px;color:#1a1a2a;-webkit-text-stroke:0.15px currentColor;">Toilet Men</div>
<div class="a" style="left:430.0px;top:190.9px;font-size:4.1px;line-height:5.1px;color:#1a1a2a;-webkit-text-stroke:0.15px currentColor;">Kitchen</div>
<div class="a" style="left:392.0px;top:299.9px;font-size:4.1px;line-height:5.1px;color:#1a1a2a;-webkit-text-stroke:0.15px currentColor;">Dining room</div>
<div class="a" style="left:401.0px;top:164.6px;font-size:2.9px;line-height:3.9px;color:#000;font-weight:bold;">909.64</div>
<div class="a" style="left:434.0px;top:164.6px;font-size:2.9px;line-height:3.9px;color:#000;font-weight:bold;">909.64</div>
<div class="a" style="left:398.0px;top:202.6px;font-size:2.9px;line-height:3.9px;color:#000;font-weight:bold;">909.64</div>
<div class="a" style="left:462.0px;top:202.6px;font-size:2.9px;line-height:3.9px;color:#000;font-weight:bold;">909.64</div>
<div class="a" style="left:432.0px;top:215.6px;font-size:2.9px;line-height:3.9px;color:#000;font-weight:bold;">909.64</div>
<div class="a" style="left:466.0px;top:177.6px;font-size:2.9px;line-height:3.9px;color:#000;font-weight:bold;">909.64</div>
<div class="a" style="left:437.0px;top:156.1px;font-size:2.9px;line-height:3.9px;color:#000;font-weight:bold;">314.80</div>
<div class="a" style="left:356.0px;top:225.6px;font-size:2.9px;line-height:3.9px;color:#000;font-weight:bold;">347.45</div>
<div class="a" style="left:412.0px;top:225.6px;font-size:2.9px;line-height:3.9px;color:#000;font-weight:bold;">314.80</div>
<div class="a" style="left:464.0px;top:223.6px;font-size:2.9px;line-height:3.9px;color:#000;font-weight:bold;">314.80</div>
<div class="a" style="left:354.0px;top:238.6px;font-size:2.9px;line-height:3.9px;color:#000;font-weight:bold;">14.19</div>
<div class="a" style="left:360.0px;top:253.6px;font-size:2.9px;line-height:3.9px;color:#000;font-weight:bold;">314.80</div>
<div class="a" style="left:398.0px;top:252.6px;font-size:2.9px;line-height:3.9px;color:#000;font-weight:bold;">47.9</div>
<div class="a" style="left:414.0px;top:256.6px;font-size:2.9px;line-height:3.9px;color:#000;font-weight:bold;">314.80</div>
<div class="a" style="left:428.0px;top:267.6px;font-size:2.9px;line-height:3.9px;color:#000;font-weight:bold;">15.19</div>
<div class="a" style="left:328.0px;top:278.6px;font-size:2.9px;line-height:3.9px;color:#000;font-weight:bold;">14377.75</div>
<div class="a" style="left:330.0px;top:286.6px;font-size:2.9px;line-height:3.9px;color:#000;font-weight:bold;">14377.29</div>
<div class="a" style="left:466.0px;top:278.6px;font-size:2.9px;line-height:3.9px;color:#000;font-weight:bold;">14370.75</div>
<div class="a" style="left:466.0px;top:283.6px;font-size:2.9px;line-height:3.9px;color:#000;font-weight:bold;">16634.64</div>
<div class="a" style="left:328.0px;top:291.6px;font-size:2.9px;line-height:3.9px;color:#000;font-weight:bold;">14377.29</div>
<div class="a" style="left:328.0px;top:299.6px;font-size:2.9px;line-height:3.9px;color:#000;font-weight:bold;">26384.64</div>
<div class="a" style="left:466.0px;top:303.6px;font-size:2.9px;line-height:3.9px;color:#000;font-weight:bold;">14370.75</div>
<div class="a" style="left:466.0px;top:311.6px;font-size:2.9px;line-height:3.9px;color:#000;font-weight:bold;">16634.64</div>
<div class="a" style="left:360.0px;top:318.6px;font-size:2.9px;line-height:3.9px;color:#000;font-weight:bold;">314.80</div>
<div class="a" style="left:404.0px;top:321.6px;font-size:2.9px;line-height:3.9px;color:#000;font-weight:bold;">314.80</div>
<div class="a" style="left:452.0px;top:319.6px;font-size:2.9px;line-height:3.9px;color:#000;font-weight:bold;">314.80</div>
<div class="a" style="left:474.0px;top:341.6px;font-size:2.9px;line-height:3.9px;color:#000;font-weight:bold;">14370.75</div>
<div class="a" style="left:478.0px;top:354.6px;font-size:2.9px;line-height:3.9px;color:#000;font-weight:bold;">7.14</div>
<div class="a" style="left:430.0px;top:347.6px;font-size:2.9px;line-height:3.9px;color:#000;font-weight:bold;">8.19</div>
<div class="a" style="left:430.0px;top:364.6px;font-size:2.9px;line-height:3.9px;color:#000;font-weight:bold;">15.19</div>
<div class="a" style="left:328.0px;top:364.6px;font-size:2.9px;line-height:3.9px;color:#000;font-weight:bold;">14377.29</div>
<div class="a" style="left:328.0px;top:371.6px;font-size:2.9px;line-height:3.9px;color:#000;font-weight:bold;">14634.29</div>
<div class="a" style="left:408.0px;top:378.6px;font-size:2.9px;line-height:3.9px;color:#000;font-weight:bold;">314.80</div>
<div class="a" style="left:456.0px;top:378.6px;font-size:2.9px;line-height:3.9px;color:#000;font-weight:bold;">314.80</div>
<div class="a" style="left:361.0px;top:382.6px;font-size:2.9px;line-height:3.9px;color:#000;font-weight:bold;">14.02</div>
<div class="a" style="left:396.0px;top:385.6px;font-size:2.9px;line-height:3.9px;color:#000;font-weight:bold;">7.04</div>
<div class="a" style="left:328.0px;top:385.6px;font-size:2.9px;line-height:3.9px;color:#000;font-weight:bold;">314.79(L:70)0</div>
<div class="a" style="left:474.0px;top:385.6px;font-size:2.9px;line-height:3.9px;color:#000;font-weight:bold;">314.79(L)</div>
<div class="a" style="left:348.0px;top:211.6px;font-size:2.9px;line-height:3.9px;color:#000;font-weight:bold;">15.19</div>
<div class="a" style="left:374.0px;top:210.6px;font-size:2.9px;line-height:3.9px;color:#000;font-weight:bold;">15.19</div>
<div class="a" style="left:331.0px;top:197.6px;font-size:2.9px;line-height:3.9px;color:#000;font-weight:bold;">55</div>
<div class="a" style="left:350.0px;top:193.6px;font-size:2.9px;line-height:3.9px;color:#000;font-weight:bold;">55</div>
<div class="a" style="left:371.0px;top:193.6px;font-size:2.9px;line-height:3.9px;color:#000;font-weight:bold;">55</div>
<div class="a" style="left:386.0px;top:195.6px;font-size:2.9px;line-height:3.9px;color:#000;font-weight:bold;">55</div>
<div class="a" style="left:390.0px;top:214.6px;font-size:2.9px;line-height:3.9px;color:#000;font-weight:bold;">17</div>
<div class="a" style="left:402.0px;top:186.6px;font-size:2.9px;line-height:3.9px;color:#000;font-weight:bold;">17</div>
<div class="a" style="left:476.0px;top:195.6px;font-size:2.9px;line-height:3.9px;color:#000;font-weight:bold;">11</div>
<div class="a" style="left:435.0px;top:220.6px;font-size:2.9px;line-height:3.9px;color:#000;font-weight:bold;">11</div>
<div class="a" style="left:356.0px;top:221.6px;font-size:2.9px;line-height:3.9px;color:#000;font-weight:bold;">347.45</div>
<div class="a" style="left:446.0px;top:191.6px;font-size:2.9px;line-height:3.9px;color:#000;font-weight:bold;">314.80</div>
<div class="a" style="left:454.0px;top:181.6px;font-size:2.9px;line-height:3.9px;color:#000;font-weight:bold;">314.80</div>
<div class="a" style="left:466.0px;top:166.6px;font-size:2.9px;line-height:3.9px;color:#000;font-weight:bold;">314.80</div>
<div class="a" style="left:368.0px;top:233.1px;font-size:1.9px;line-height:2.9px;color:#111;">B(HL,0001) 72m17,25</div>
<div class="a" style="left:404.0px;top:233.1px;font-size:1.9px;line-height:2.9px;color:#111;">B(HL,0001) 72m17,25</div>
<div class="a" style="left:334.0px;top:183.1px;font-size:1.9px;line-height:2.9px;color:#111;">E7M03</div>
<div class="a" style="left:378.0px;top:183.1px;font-size:1.9px;line-height:2.9px;color:#111;">E7M03</div>
<div class="a" style="left:386.0px;top:333.1px;font-size:1.9px;line-height:2.9px;color:#111;">E7M03</div>
<div class="a" style="left:342.0px;top:259.1px;font-size:1.9px;line-height:2.9px;color:#111;">B(HL) 7/25m27</div>
<div class="a" style="left:346.0px;top:313.1px;font-size:1.9px;line-height:2.9px;color:#111;">B(HL) 7/25m27</div>
<div class="a" style="left:424.0px;top:313.1px;font-size:1.9px;line-height:2.9px;color:#111;">B(HL) 7/25m26</div>
<div class="a" style="left:406.0px;top:342.1px;font-size:1.9px;line-height:2.9px;color:#111;">B(HL) 7/25m26</div>
<div class="a" style="left:464.0px;top:341.1px;font-size:1.9px;line-height:2.9px;color:#111;">B(HL) 7/25m28</div>
<div class="a" style="left:342.0px;top:355.1px;font-size:1.9px;line-height:2.9px;color:#111;">25.07</div>
<div class="a" style="left:354.0px;top:351.1px;font-size:1.9px;line-height:2.9px;color:#111;">25.07</div>
<div class="a" style="left:416.0px;top:197.1px;font-size:1.9px;line-height:2.9px;color:#111;">B(HL) 25</div>
<div class="a" style="left:469.0px;top:236.1px;font-size:1.9px;line-height:2.9px;color:#111;">B(HL)</div>
<div class="a" style="left:475.0px;top:170.1px;font-size:1.9px;line-height:2.9px;color:#111;">B(HL) 2m/25</div>
<div class="a" style="left:328.0px;top:383.1px;font-size:1.9px;line-height:2.9px;color:#111;">B(HL) 7/25m27</div>
<div class="a" style="left:474.0px;top:383.1px;font-size:1.9px;line-height:2.9px;color:#111;">B(HL) 7/25</div>
<svg style="left:0;top:0" width="1024" height="555" viewBox="0 0 1024 555"><defs><filter id="b1" x="-10%" y="-10%" width="120%" height="120%"><feGaussianBlur stdDeviation="0.9"/></filter><filter id="b2" x="-10%" y="-10%" width="120%" height="120%"><feGaussianBlur stdDeviation="0.8"/></filter><clipPath id="cpf"><rect x="1.5" y="2.5" width="163" height="236"/></clipPath></defs><g transform="matrix(0.6847 0.3423 -0.7051 0.3589 703.1 197.8)"><g clip-path="url(#cpf)"><rect x="1.5" y="2.5" width="163" height="236" fill="#1b2ad6"/><g filter="url(#b2)"><rect x="0" y="190" width="36" height="50" fill="#4716a8"/><rect x="128" y="60" width="40" height="60" fill="#4716a8"/><rect x="60" y="0" width="105" height="80" fill="#4716a8"/><rect x="0" y="75" width="14" height="140" fill="#4716a8"/><rect x="140" y="215" width="26" height="25" fill="#4716a8"/><ellipse cx="83.3" cy="227.4" rx="5.3" ry="2.4" fill="#14c0d8" opacity="0.8"/><ellipse cx="46.6" cy="233.3" rx="6.1" ry="2.3" fill="#14c0d8" opacity="0.8"/><ellipse cx="33.2" cy="221.3" rx="5.7" ry="2.4" fill="#1e7af0" opacity="0.8"/><ellipse cx="108.8" cy="228.3" rx="7.8" ry="2.0" fill="#14c0d8" opacity="0.8"/><ellipse cx="106.2" cy="217.8" rx="7.2" ry="1.1" fill="#1e7af0" opacity="0.8"/><ellipse cx="25.0" cy="235.1" rx="6.9" ry="1.5" fill="#1e7af0" opacity="0.8"/><ellipse cx="102.7" cy="218.7" rx="6.2" ry="1.8" fill="#18a8e8" opacity="0.8"/><ellipse cx="112.7" cy="225.0" rx="5.0" ry="1.9" fill="#2a58e8" opacity="0.8"/><ellipse cx="150.4" cy="216.0" rx="4.6" ry="1.4" fill="#2a58e8" opacity="0.8"/><ellipse cx="60.5" cy="215.7" rx="5.0" ry="2.4" fill="#1e7af0" opacity="0.8"/><ellipse cx="74.1" cy="237.0" rx="4.1" ry="2.5" fill="#1e7af0" opacity="0.8"/><ellipse cx="27.3" cy="223.0" rx="5.1" ry="1.9" fill="#14c0d8" opacity="0.8"/><ellipse cx="47.8" cy="230.2" rx="3.4" ry="1.5" fill="#2a58e8" opacity="0.8"/><ellipse cx="155.0" cy="232.2" rx="3.7" ry="2.1" fill="#1e7af0" opacity="0.8"/><ellipse cx="21.5" cy="225.2" rx="3.9" ry="1.9" fill="#14c0d8" opacity="0.8"/><ellipse cx="82.6" cy="218.6" rx="5.1" ry="1.6" fill="#18a8e8" opacity="0.8"/><ellipse cx="75.3" cy="237.8" rx="4.3" ry="2.6" fill="#1e7af0" opacity="0.8"/><ellipse cx="132.5" cy="221.3" rx="4.1" ry="1.6" fill="#1e7af0" opacity="0.8"/><ellipse cx="139.6" cy="229.4" rx="3.2" ry="1.2" fill="#1e7af0" opacity="0.8"/><ellipse cx="81.8" cy="214.2" rx="7.2" ry="1.6" fill="#2a58e8" opacity="0.8"/><ellipse cx="30.4" cy="219.0" rx="3.1" ry="1.6" fill="#18a8e8" opacity="0.8"/><ellipse cx="107.1" cy="217.1" rx="7.2" ry="1.2" fill="#14c0d8" opacity="0.8"/><ellipse cx="74.1" cy="229.1" rx="7.5" ry="2.3" fill="#2a58e8" opacity="0.8"/><ellipse cx="54.9" cy="218.6" rx="6.4" ry="1.6" fill="#18a8e8" opacity="0.8"/><ellipse cx="87.6" cy="215.9" rx="3.5" ry="1.1" fill="#1e7af0" opacity="0.8"/><ellipse cx="154.8" cy="219.7" rx="4.3" ry="2.3" fill="#14c0d8" opacity="0.8"/><ellipse cx="103.5" cy="221.0" rx="7.6" ry="2.6" fill="#18a8e8" opacity="0.8"/><ellipse cx="37.7" cy="225.5" rx="4.4" ry="2.5" fill="#1e7af0" opacity="0.8"/><ellipse cx="48.6" cy="214.4" rx="5.1" ry="1.4" fill="#2a58e8" opacity="0.8"/><ellipse cx="26.5" cy="220.8" rx="3.5" ry="1.2" fill="#18a8e8" opacity="0.8"/><ellipse cx="83.0" cy="221.9" rx="5.9" ry="2.5" fill="#18a8e8" opacity="0.8"/><ellipse cx="86.5" cy="222.6" rx="7.8" ry="1.0" fill="#2a58e8" opacity="0.8"/><ellipse cx="109.1" cy="225.6" rx="4.6" ry="2.6" fill="#2a58e8" opacity="0.8"/><ellipse cx="30.5" cy="227.1" rx="7.5" ry="2.2" fill="#1e7af0" opacity="0.8"/><ellipse cx="118.5" cy="233.0" rx="4.8" ry="2.1" fill="#2a58e8" opacity="0.8"/><ellipse cx="146.1" cy="234.9" rx="7.7" ry="1.0" fill="#14c0d8" opacity="0.8"/><ellipse cx="90.0" cy="214.3" rx="4.9" ry="1.0" fill="#14c0d8" opacity="0.8"/><ellipse cx="30.1" cy="216.2" rx="8.0" ry="2.4" fill="#1e7af0" opacity="0.8"/><ellipse cx="121.9" cy="223.3" rx="5.2" ry="2.3" fill="#14c0d8" opacity="0.8"/><ellipse cx="31.7" cy="232.0" rx="4.6" ry="1.1" fill="#1e7af0" opacity="0.8"/><ellipse cx="23.1" cy="237.0" rx="5.5" ry="2.0" fill="#1e7af0" opacity="0.8"/><ellipse cx="148.9" cy="220.1" rx="4.8" ry="1.2" fill="#1e7af0" opacity="0.8"/><ellipse cx="105.6" cy="226.4" rx="6.3" ry="1.7" fill="#2a58e8" opacity="0.8"/><ellipse cx="144.8" cy="221.8" rx="4.0" ry="1.7" fill="#2a58e8" opacity="0.8"/><ellipse cx="132.8" cy="235.9" rx="4.9" ry="1.9" fill="#18a8e8" opacity="0.8"/><ellipse cx="64.3" cy="217.3" rx="4.8" ry="2.4" fill="#14c0d8" opacity="0.8"/><ellipse cx="96.6" cy="237.6" rx="1.8" ry="1.8" fill="#28c060" opacity="0.9"/><ellipse cx="93.2" cy="236.7" rx="2.6" ry="1.8" fill="#e83018" opacity="0.9"/><ellipse cx="82.3" cy="235.2" rx="2.9" ry="1.1" fill="#18b0e8" opacity="0.9"/><ellipse cx="73.8" cy="220.6" rx="1.6" ry="2.1" fill="#18b0e8" opacity="0.9"/><ellipse cx="81.9" cy="234.2" rx="3.4" ry="1.6" fill="#18c8d0" opacity="0.9"/><ellipse cx="87.2" cy="223.4" rx="2.2" ry="1.2" fill="#e8e020" opacity="0.9"/><ellipse cx="109.5" cy="228.0" rx="3.1" ry="2.0" fill="#e8a018" opacity="0.9"/><ellipse cx="97.3" cy="226.6" rx="3.6" ry="1.3" fill="#18c8d0" opacity="0.9"/><ellipse cx="83.9" cy="220.2" rx="3.1" ry="1.1" fill="#e83018" opacity="0.9"/><ellipse cx="93.3" cy="224.1" rx="3.1" ry="2.5" fill="#e8e020" opacity="0.9"/><ellipse cx="47.9" cy="222.9" rx="4.2" ry="1.1" fill="#e8a018" opacity="0.9"/><ellipse cx="91.9" cy="236.8" rx="2.7" ry="1.7" fill="#e8a018" opacity="0.9"/><ellipse cx="100.9" cy="220.1" rx="3.2" ry="2.4" fill="#18b0e8" opacity="0.9"/><ellipse cx="117.7" cy="234.3" rx="2.9" ry="2.0" fill="#e8e020" opacity="0.9"/><ellipse cx="97.8" cy="234.7" rx="4.3" ry="1.2" fill="#e8a018" opacity="0.9"/><ellipse cx="112.0" cy="224.4" rx="4.4" ry="2.6" fill="#e83018" opacity="0.9"/><ellipse cx="69.6" cy="225.8" rx="4.1" ry="1.6" fill="#e8a018" opacity="0.9"/><ellipse cx="86.7" cy="221.5" rx="2.5" ry="1.7" fill="#e83018" opacity="0.9"/><ellipse cx="87.4" cy="223.9" rx="2.8" ry="1.1" fill="#18c8d0" opacity="0.9"/><ellipse cx="120.8" cy="229.6" rx="3.9" ry="1.2" fill="#e8a018" opacity="0.9"/><ellipse cx="101.3" cy="233.0" rx="3.6" ry="2.5" fill="#e8a018" opacity="0.9"/><ellipse cx="104.6" cy="228.9" rx="1.8" ry="1.4" fill="#e8a018" opacity="0.9"/><ellipse cx="81.4" cy="233.1" rx="2.0" ry="1.8" fill="#e8a018" opacity="0.9"/><ellipse cx="90.2" cy="236.3" rx="2.4" ry="1.6" fill="#e8e020" opacity="0.9"/><ellipse cx="107.7" cy="223.7" rx="4.4" ry="1.8" fill="#28c060" opacity="0.9"/><ellipse cx="68.9" cy="230.3" rx="2.7" ry="1.2" fill="#28c060" opacity="0.9"/><ellipse cx="104.6" cy="229.7" rx="3.0" ry="1.6" fill="#18c8d0" opacity="0.9"/><ellipse cx="92.4" cy="234.4" rx="1.9" ry="1.1" fill="#18b0e8" opacity="0.9"/><ellipse cx="107.0" cy="228.3" rx="2.3" ry="1.8" fill="#e83018" opacity="0.9"/><ellipse cx="118.0" cy="222.3" rx="4.2" ry="2.5" fill="#e83018" opacity="0.9"/><ellipse cx="105.9" cy="222.0" rx="3.4" ry="2.5" fill="#e83018" opacity="0.9"/><ellipse cx="84.4" cy="222.3" rx="1.6" ry="1.2" fill="#18c8d0" opacity="0.9"/><ellipse cx="102.6" cy="233.0" rx="3.4" ry="1.2" fill="#28c060" opacity="0.9"/><ellipse cx="92.8" cy="233.2" rx="4.1" ry="2.0" fill="#18c8d0" opacity="0.9"/><ellipse cx="37.5" cy="236.1" rx="2.4" ry="1.5" fill="#18c8d0" opacity="0.85"/><ellipse cx="27.8" cy="230.5" rx="2.8" ry="2.0" fill="#28c060" opacity="0.85"/><ellipse cx="34.5" cy="225.5" rx="2.1" ry="1.9" fill="#28c060" opacity="0.85"/><ellipse cx="38.8" cy="235.0" rx="2.3" ry="1.4" fill="#28c060" opacity="0.85"/><ellipse cx="45.0" cy="238.0" rx="1.8" ry="1.3" fill="#18c8d0" opacity="0.85"/><ellipse cx="37.4" cy="233.6" rx="2.5" ry="1.5" fill="#18b0e8" opacity="0.85"/><ellipse cx="49.3" cy="233.3" rx="2.5" ry="1.8" fill="#28c060" opacity="0.85"/><ellipse cx="36.4" cy="222.3" rx="2.9" ry="1.4" fill="#28c060" opacity="0.85"/><ellipse cx="43.3" cy="233.3" rx="2.8" ry="1.8" fill="#18b0e8" opacity="0.85"/><ellipse cx="33.2" cy="225.0" rx="2.7" ry="1.0" fill="#18c8d0" opacity="0.85"/><ellipse cx="40.8" cy="236.5" rx="1.9" ry="1.2" fill="#e8e020" opacity="0.85"/><ellipse cx="29.0" cy="225.3" rx="4.0" ry="2.1" fill="#28c060" opacity="0.85"/><ellipse cx="42.4" cy="237.2" rx="1.7" ry="1.1" fill="#e8e020" opacity="0.85"/><ellipse cx="41.6" cy="228.3" rx="2.8" ry="1.5" fill="#e8e020" opacity="0.85"/><ellipse cx="38.9" cy="233.2" rx="2.0" ry="1.5" fill="#28c060" opacity="0.85"/><ellipse cx="39.2" cy="233.8" rx="3.8" ry="1.7" fill="#e8e020" opacity="0.85"/><ellipse cx="142.3" cy="203.6" rx="2.8" ry="7.0" fill="#4716a8" opacity="0.8"/><ellipse cx="156.9" cy="214.3" rx="2.4" ry="4.0" fill="#2a58e8" opacity="0.8"/><ellipse cx="154.0" cy="133.2" rx="1.9" ry="3.6" fill="#4716a8" opacity="0.8"/><ellipse cx="157.8" cy="105.0" rx="1.7" ry="4.6" fill="#2a58e8" opacity="0.8"/><ellipse cx="152.9" cy="137.7" rx="2.6" ry="5.0" fill="#2a58e8" opacity="0.8"/><ellipse cx="157.3" cy="91.0" rx="2.0" ry="3.5" fill="#4716a8" opacity="0.8"/><ellipse cx="161.3" cy="234.5" rx="1.8" ry="7.7" fill="#1e7af0" opacity="0.8"/><ellipse cx="156.0" cy="132.7" rx="2.4" ry="5.7" fill="#2a58e8" opacity="0.8"/><ellipse cx="149.4" cy="236.0" rx="2.6" ry="6.8" fill="#18a8e8" opacity="0.8"/><ellipse cx="163.5" cy="83.6" rx="2.6" ry="4.3" fill="#1e7af0" opacity="0.8"/><ellipse cx="149.6" cy="87.9" rx="2.5" ry="3.1" fill="#18a8e8" opacity="0.8"/><ellipse cx="146.2" cy="123.0" rx="2.3" ry="5.5" fill="#4716a8" opacity="0.8"/><ellipse cx="163.2" cy="168.6" rx="2.5" ry="7.0" fill="#1e7af0" opacity="0.8"/><ellipse cx="141.8" cy="173.2" rx="2.1" ry="7.7" fill="#1e7af0" opacity="0.8"/><ellipse cx="149.3" cy="231.3" rx="2.3" ry="6.0" fill="#2a58e8" opacity="0.8"/><ellipse cx="150.3" cy="157.1" rx="2.3" ry="6.0" fill="#4716a8" opacity="0.8"/><ellipse cx="148.8" cy="124.6" rx="2.3" ry="4.4" fill="#4716a8" opacity="0.8"/><ellipse cx="157.2" cy="126.2" rx="2.7" ry="5.9" fill="#1e7af0" opacity="0.8"/><ellipse cx="155.2" cy="143.8" rx="1.6" ry="4.6" fill="#2a58e8" opacity="0.8"/><ellipse cx="149.5" cy="170.8" rx="1.6" ry="7.5" fill="#4716a8" opacity="0.8"/><ellipse cx="150.3" cy="154.5" rx="1.6" ry="3.5" fill="#18a8e8" opacity="0.8"/><ellipse cx="159.4" cy="221.9" rx="3.0" ry="7.1" fill="#18a8e8" opacity="0.8"/><ellipse cx="154.5" cy="98.0" rx="2.2" ry="4.0" fill="#2a58e8" opacity="0.8"/><ellipse cx="141.2" cy="162.4" rx="2.0" ry="3.7" fill="#1e7af0" opacity="0.8"/><ellipse cx="150.0" cy="173.8" rx="2.0" ry="6.7" fill="#2a58e8" opacity="0.8"/><ellipse cx="159.6" cy="101.4" rx="2.6" ry="4.2" fill="#4716a8" opacity="0.8"/><ellipse cx="142.7" cy="219.3" rx="1.9" ry="6.0" fill="#4716a8" opacity="0.8"/><ellipse cx="157.4" cy="189.1" rx="2.4" ry="6.8" fill="#18a8e8" opacity="0.8"/><ellipse cx="144.6" cy="118.8" rx="2.8" ry="3.2" fill="#18a8e8" opacity="0.8"/><ellipse cx="141.5" cy="122.3" rx="1.5" ry="3.2" fill="#2a58e8" opacity="0.8"/><ellipse cx="143.8" cy="25.0" rx="2.8" ry="2.6" fill="#f0a018" opacity="0.9"/><ellipse cx="144.1" cy="80.5" rx="2.1" ry="2.8" fill="#2a58e8" opacity="0.9"/><ellipse cx="146.9" cy="61.8" rx="2.6" ry="3.8" fill="#f0a018" opacity="0.9"/><ellipse cx="159.4" cy="69.2" rx="2.0" ry="5.0" fill="#e8e020" opacity="0.9"/><ellipse cx="148.1" cy="14.9" rx="2.4" ry="6.0" fill="#e8e020" opacity="0.9"/><ellipse cx="146.5" cy="46.3" rx="2.0" ry="3.5" fill="#e8e020" opacity="0.9"/><ellipse cx="140.5" cy="72.1" rx="2.2" ry="3.7" fill="#f0a018" opacity="0.9"/><ellipse cx="152.8" cy="67.4" rx="1.7" ry="5.1" fill="#2a58e8" opacity="0.9"/><ellipse cx="140.0" cy="19.8" rx="1.3" ry="3.2" fill="#18a8e8" opacity="0.9"/><ellipse cx="156.8" cy="57.8" rx="2.8" ry="2.9" fill="#e03018" opacity="0.9"/><ellipse cx="155.1" cy="28.8" rx="1.8" ry="3.8" fill="#f0a018" opacity="0.9"/><ellipse cx="153.5" cy="74.3" rx="2.0" ry="5.2" fill="#e03018" opacity="0.9"/><ellipse cx="145.9" cy="28.1" rx="2.9" ry="4.9" fill="#2a58e8" opacity="0.9"/><ellipse cx="151.4" cy="9.7" rx="1.2" ry="4.7" fill="#e03018" opacity="0.9"/><ellipse cx="153.2" cy="65.9" rx="1.9" ry="3.6" fill="#18a8e8" opacity="0.9"/><ellipse cx="142.0" cy="49.7" rx="1.5" ry="5.0" fill="#e8e020" opacity="0.9"/><ellipse cx="160.9" cy="25.2" rx="1.6" ry="2.2" fill="#f0a018" opacity="0.9"/><ellipse cx="142.1" cy="26.4" rx="2.4" ry="5.2" fill="#f0a018" opacity="0.9"/><ellipse cx="139.7" cy="46.2" rx="1.4" ry="2.3" fill="#18a8e8" opacity="0.9"/><ellipse cx="157.2" cy="74.0" rx="1.2" ry="4.6" fill="#f0a018" opacity="0.9"/><ellipse cx="140.5" cy="67.5" rx="1.6" ry="2.9" fill="#2a58e8" opacity="0.9"/><ellipse cx="157.9" cy="44.2" rx="1.9" ry="3.4" fill="#2a58e8" opacity="0.9"/></g></g></g><g transform="matrix(0.6847 0.3245 -0.6983 0.3593 701.5 187.0)"><rect x="1.5" y="2.5" width="163" height="236" fill="#3a1488"/><rect x="60" y="2.5" width="104.5" height="236" fill="#2a22b8"/></g><g transform="matrix(0.6847 0.3245 -0.6983 0.3593 701.5 184.1)"><g clip-path="url(#cpf)"><rect x="1.5" y="2.5" width="163" height="236" fill="#ae0909"/><g filter="url(#b1)"><ellipse cx="29.7" cy="89.5" rx="20.5" ry="14" fill="#ee1a0c"/><ellipse cx="29.7" cy="149.3" rx="20.5" ry="14" fill="#ee1a0c"/><ellipse cx="29.7" cy="208.5" rx="20.5" ry="14" fill="#ee1a0c"/><ellipse cx="82.4" cy="89.5" rx="20.5" ry="14" fill="#ee1a0c"/><ellipse cx="82.4" cy="149.3" rx="20.5" ry="14" fill="#ee1a0c"/><ellipse cx="82.4" cy="208.5" rx="20.5" ry="14" fill="#ee1a0c"/><ellipse cx="135.8" cy="89.5" rx="20.5" ry="14" fill="#ee1a0c"/><ellipse cx="135.8" cy="149.3" rx="20.5" ry="14" fill="#ee1a0c"/><ellipse cx="135.8" cy="208.5" rx="20.5" ry="14" fill="#ee1a0c"/><ellipse cx="29.7" cy="89.5" rx="9" ry="4" fill="#ff5026" opacity="0.9"/><ellipse cx="29.7" cy="149.3" rx="9" ry="4" fill="#ff5026" opacity="0.9"/><ellipse cx="29.7" cy="208.5" rx="9" ry="4" fill="#ff5026" opacity="0.9"/><ellipse cx="82.4" cy="89.5" rx="9" ry="4" fill="#ff5026" opacity="0.9"/><ellipse cx="82.4" cy="149.3" rx="9" ry="4" fill="#ff5026" opacity="0.9"/><ellipse cx="82.4" cy="208.5" rx="9" ry="4" fill="#ff5026" opacity="0.9"/><ellipse cx="135.8" cy="89.5" rx="9" ry="4" fill="#ff5026" opacity="0.9"/><ellipse cx="135.8" cy="149.3" rx="9" ry="4" fill="#ff5026" opacity="0.9"/><ellipse cx="135.8" cy="208.5" rx="9" ry="4" fill="#ff5026" opacity="0.9"/><ellipse cx="56" cy="120" rx="6" ry="9" fill="#960606" opacity="0.7"/><ellipse cx="109" cy="120" rx="6" ry="9" fill="#960606" opacity="0.7"/><ellipse cx="56" cy="180" rx="6" ry="9" fill="#960606" opacity="0.7"/><ellipse cx="109" cy="180" rx="6" ry="9" fill="#960606" opacity="0.7"/><ellipse cx="4" cy="120" rx="6" ry="9" fill="#960606" opacity="0.7"/><ellipse cx="4" cy="180" rx="6" ry="9" fill="#960606" opacity="0.7"/><ellipse cx="161" cy="120" rx="6" ry="9" fill="#960606" opacity="0.7"/><ellipse cx="161" cy="180" rx="6" ry="9" fill="#960606" opacity="0.7"/><ellipse cx="56" cy="235" rx="6" ry="9" fill="#960606" opacity="0.7"/><ellipse cx="109" cy="235" rx="6" ry="9" fill="#960606" opacity="0.7"/></g><g filter="url(#b2)"><rect x="62" y="2.5" width="103" height="71" fill="#e2280f"/><rect x="64.5" y="5" width="30" height="32" rx="9" fill="#f08a12"/><rect x="64.5" y="40" width="30" height="32" rx="9" fill="#f08a12"/><rect x="97.4" y="5" width="30" height="32" rx="9" fill="#f08a12"/><rect x="97.4" y="40" width="30" height="32" rx="9" fill="#f08a12"/><rect x="129" y="5" width="30" height="32" rx="9" fill="#f08a12"/><rect x="129" y="40" width="30" height="32" rx="9" fill="#f08a12"/><rect x="66.5" y="7" width="26" height="28" rx="8" fill="#c6dc16"/><rect x="66.5" y="42" width="26" height="28" rx="8" fill="#c6dc16"/><rect x="99.4" y="7" width="26" height="28" rx="8" fill="#c6dc16"/><rect x="99.4" y="42" width="26" height="28" rx="8" fill="#c6dc16"/><rect x="131" y="7" width="26" height="28" rx="8" fill="#c6dc16"/><rect x="131" y="42" width="26" height="28" rx="8" fill="#c6dc16"/><ellipse cx="76.5" cy="19" rx="6" ry="4.5" fill="#149a3c" transform="rotate(-30 79.5 21)"/><ellipse cx="82.5" cy="58" rx="6" ry="4.5" fill="#149a3c" transform="rotate(35 79.5 56)"/><ellipse cx="115.4" cy="19" rx="6" ry="4.5" fill="#149a3c" transform="rotate(35 112.4 21)"/><ellipse cx="109.4" cy="58" rx="6" ry="4.5" fill="#149a3c" transform="rotate(-30 112.4 56)"/><ellipse cx="141" cy="19" rx="6" ry="4.5" fill="#149a3c" transform="rotate(-30 144 21)"/><ellipse cx="147" cy="58" rx="6" ry="4.5" fill="#149a3c" transform="rotate(35 144 56)"/></g><g filter="url(#b2)"><rect x="1.5" y="2.5" width="60" height="71" fill="#4a14a4"/><rect x="4" y="5" width="24" height="14" fill="#f0e216"/><rect x="34" y="5" width="24" height="14" fill="#f0e216"/><rect x="4" y="24" width="12" height="14" fill="#f0e216"/><rect x="20" y="24" width="8" height="8" fill="#f0e216"/><rect x="34" y="24" width="24" height="16" fill="#f0e216"/><rect x="8" y="46" width="48" height="12" fill="#f0e216"/><rect x="20" y="60" width="24" height="12" fill="#f0e216"/><rect x="2" y="20" width="58" height="3" fill="#4a14a4"/><rect x="29" y="4" width="4" height="52" fill="#4a14a4"/><rect x="2" y="40" width="58" height="5" fill="#4a14a4"/><rect x="2" y="66" width="18" height="7" fill="#e8901a"/><rect x="44" y="62" width="16" height="10" fill="#2a30d0"/></g><rect x="52" y="95.5" width="12" height="9" fill="#14185c"/><rect x="54" y="97" width="8" height="5" fill="#1c2a9c"/><rect x="56" y="98" width="3" height="1.6" fill="#2484c4"/><rect x="50" y="103" width="4" height="3" fill="#1a7a22"/><rect x="63" y="95" width="3" height="2.5" fill="#1a7a22"/><rect x="104" y="95.5" width="12" height="9" fill="#14185c"/><rect x="106" y="97" width="8" height="5" fill="#1c2a9c"/><rect x="108" y="98" width="3" height="1.6" fill="#2484c4"/><rect x="102" y="103" width="4" height="3" fill="#1a7a22"/><rect x="115" y="95" width="3" height="2.5" fill="#1a7a22"/><rect x="24" y="120.5" width="12" height="9" fill="#14185c"/><rect x="26" y="122" width="8" height="5" fill="#1c2a9c"/><rect x="28" y="123" width="3" height="1.6" fill="#2484c4"/><rect x="22" y="128" width="4" height="3" fill="#1a7a22"/><rect x="35" y="120" width="3" height="2.5" fill="#1a7a22"/><rect x="78" y="123.5" width="12" height="9" fill="#14185c"/><rect x="80" y="125" width="8" height="5" fill="#1c2a9c"/><rect x="82" y="126" width="3" height="1.6" fill="#2484c4"/><rect x="76" y="131" width="4" height="3" fill="#1a7a22"/><rect x="89" y="123" width="3" height="2.5" fill="#1a7a22"/><rect x="52" y="155.5" width="12" height="9" fill="#14185c"/><rect x="54" y="157" width="8" height="5" fill="#1c2a9c"/><rect x="56" y="158" width="3" height="1.6" fill="#2484c4"/><rect x="50" y="163" width="4" height="3" fill="#1a7a22"/><rect x="63" y="155" width="3" height="2.5" fill="#1a7a22"/><rect x="104" y="157.5" width="12" height="9" fill="#14185c"/><rect x="106" y="159" width="8" height="5" fill="#1c2a9c"/><rect x="108" y="160" width="3" height="1.6" fill="#2484c4"/><rect x="102" y="165" width="4" height="3" fill="#1a7a22"/><rect x="115" y="157" width="3" height="2.5" fill="#1a7a22"/><rect x="24" y="180.5" width="12" height="9" fill="#14185c"/><rect x="26" y="182" width="8" height="5" fill="#1c2a9c"/><rect x="28" y="183" width="3" height="1.6" fill="#2484c4"/><rect x="22" y="188" width="4" height="3" fill="#1a7a22"/><rect x="35" y="180" width="3" height="2.5" fill="#1a7a22"/><rect x="78" y="181.5" width="12" height="9" fill="#14185c"/><rect x="80" y="183" width="8" height="5" fill="#1c2a9c"/><rect x="82" y="184" width="3" height="1.6" fill="#2484c4"/><rect x="76" y="189" width="4" height="3" fill="#1a7a22"/><rect x="89" y="181" width="3" height="2.5" fill="#1a7a22"/><rect x="130" y="121.5" width="12" height="9" fill="#14185c"/><rect x="132" y="123" width="8" height="5" fill="#1c2a9c"/><rect x="134" y="124" width="3" height="1.6" fill="#2484c4"/><rect x="128" y="129" width="4" height="3" fill="#1a7a22"/><rect x="141" y="121" width="3" height="2.5" fill="#1a7a22"/><rect x="130" y="183.5" width="12" height="9" fill="#14185c"/><rect x="132" y="185" width="8" height="5" fill="#1c2a9c"/><rect x="134" y="186" width="3" height="1.6" fill="#2484c4"/><rect x="128" y="191" width="4" height="3" fill="#1a7a22"/><rect x="141" y="183" width="3" height="2.5" fill="#1a7a22"/><path d="M1.5 2.5 V238.5M9.7 2.5 V238.5M17.9 2.5 V238.5M26.1 2.5 V238.5M34.3 2.5 V238.5M42.5 2.5 V238.5M50.7 2.5 V238.5M58.9 2.5 V238.5M67.1 2.5 V238.5M75.3 2.5 V238.5M83.5 2.5 V238.5M91.7 2.5 V238.5M99.9 2.5 V238.5M108.1 2.5 V238.5M116.3 2.5 V238.5M124.5 2.5 V238.5M132.7 2.5 V238.5M140.9 2.5 V238.5M149.1 2.5 V238.5M157.3 2.5 V238.5M165.5 2.5 V238.5M173.7 2.5 V238.5M1.5 2.5 H164.5M1.5 10.7 H164.5M1.5 18.9 H164.5M1.5 27.1 H164.5M1.5 35.3 H164.5M1.5 43.5 H164.5M1.5 51.7 H164.5M1.5 59.9 H164.5M1.5 68.1 H164.5M1.5 76.3 H164.5M1.5 84.5 H164.5M1.5 92.7 H164.5M1.5 100.9 H164.5M1.5 109.1 H164.5M1.5 117.3 H164.5M1.5 125.5 H164.5M1.5 133.7 H164.5M1.5 141.9 H164.5M1.5 150.1 H164.5M1.5 158.3 H164.5M1.5 166.5 H164.5M1.5 174.7 H164.5M1.5 182.9 H164.5M1.5 191.1 H164.5M1.5 199.3 H164.5M1.5 207.5 H164.5M1.5 215.7 H164.5M1.5 223.9 H164.5M1.5 232.1 H164.5M1.5 240.3 H164.5M-244.5 2.5 L-8.5 238.5M-236.3 2.5 L-0.3 238.5M-228.1 2.5 L7.9 238.5M-219.9 2.5 L16.1 238.5M-211.7 2.5 L24.3 238.5M-203.5 2.5 L32.5 238.5M-195.3 2.5 L40.7 238.5M-187.1 2.5 L48.9 238.5M-178.9 2.5 L57.1 238.5M-170.7 2.5 L65.3 238.5M-162.5 2.5 L73.5 238.5M-154.3 2.5 L81.7 238.5M-146.1 2.5 L89.9 238.5M-137.9 2.5 L98.1 238.5M-129.7 2.5 L106.3 238.5M-121.5 2.5 L114.5 238.5M-113.3 2.5 L122.7 238.5M-105.1 2.5 L130.9 238.5M-96.9 2.5 L139.1 238.5M-88.7 2.5 L147.3 238.5M-80.5 2.5 L155.5 238.5M-72.3 2.5 L163.7 238.5M-64.1 2.5 L171.9 238.5M-55.9 2.5 L180.1 238.5M-47.7 2.5 L188.3 238.5M-39.5 2.5 L196.5 238.5M-31.3 2.5 L204.7 238.5M-23.1 2.5 L212.9 238.5M-14.9 2.5 L221.1 238.5M-6.7 2.5 L229.3 238.5M1.5 2.5 L237.5 238.5M9.7 2.5 L245.7 238.5M17.9 2.5 L253.9 238.5M26.1 2.5 L262.1 238.5M34.3 2.5 L270.3 238.5M42.5 2.5 L278.5 238.5M50.7 2.5 L286.7 238.5M58.9 2.5 L294.9 238.5M67.1 2.5 L303.1 238.5M75.3 2.5 L311.3 238.5M83.5 2.5 L319.5 238.5M91.7 2.5 L327.7 238.5M99.9 2.5 L335.9 238.5M108.1 2.5 L344.1 238.5M116.3 2.5 L352.3 238.5M124.5 2.5 L360.5 238.5M132.7 2.5 L368.7 238.5M140.9 2.5 L376.9 238.5M149.1 2.5 L385.1 238.5M157.3 2.5 L393.3 238.5M165.5 2.5 L401.5 238.5M173.7 2.5 L409.7 238.5" fill="none" stroke="#300000" stroke-width="0.4" opacity="0.5" vector-effect="non-scaling-stroke"/></g></g><path d="M701.3 161.3L816.3 220.3M816.3 220.3L646.9 306.0M646.9 306.0L531.9 247.0M531.9 247.0L701.3 161.3M701.3 198.5L816.3 257.5M816.3 257.5L646.9 343.2M646.9 343.2L531.9 284.2M531.9 284.2L701.3 198.5M701.3 161.3L701.3 198.5M816.3 220.3L816.3 257.5M646.9 306.0L646.9 343.2M531.9 247.0L531.9 284.2M700.9 164.5L812.4 221.7M812.4 221.7L647.3 305.2M647.3 305.2L535.8 248.0M535.8 248.0L700.9 164.5M700.9 199.5L812.4 256.7M812.4 256.7L647.3 340.2M647.3 340.2L535.8 283.0M535.8 283.0L700.9 199.5M700.9 164.5L700.9 199.5M812.4 221.7L812.4 256.7M647.3 305.2L647.3 340.2M535.8 248.0L535.8 283.0M742.4 185.7L692.8 210.8M742.4 185.7L742.4 220.7M692.8 210.8L692.8 245.8M651.0 189.4L763.2 247.0M651.0 189.4L651.0 224.4M763.2 247.0L763.2 282.0M720.8 174.7L683.2 193.7M720.8 174.7L720.8 209.7M683.2 193.7L683.2 228.7M743.8 186.5L694.2 211.6M743.8 186.5L743.8 221.5M694.2 211.6L694.2 246.6M649.5 190.1L761.8 247.7M649.5 190.1L649.5 225.1M761.8 247.7L761.8 282.7" fill="none" stroke="#828282" stroke-width="0.6" opacity="0.95"/><path d="M631.1 203.8L609.9 214.6L609.9 229.6L631.1 218.8ZM632.9 205.7L611.6 216.5L611.6 230.5L632.9 219.7ZM600.7 219.2L585.1 227.1L585.1 242.1L600.7 234.2ZM602.4 221.1L586.8 229.0L586.8 243.0L602.4 235.1ZM571.6 233.9L552.5 243.6L552.5 258.6L571.6 248.9ZM573.3 235.8L554.2 245.5L554.2 259.5L573.3 249.8ZM552.8 267.7L568.1 275.6L568.1 302.3L552.8 294.4ZM554.9 266.7L570.3 274.5L570.3 300.7L554.9 292.9ZM582.1 282.8L601.6 292.8L601.6 319.5L582.1 309.5ZM584.2 281.7L603.7 291.7L603.7 317.9L584.2 307.9ZM614.1 299.2L632.3 308.5L632.3 335.2L614.1 325.9ZM616.3 298.1L634.4 307.4L634.4 333.6L616.3 324.3ZM746.1 265.8L724.9 276.6L724.9 292.6L746.1 281.8ZM744.4 264.9L723.1 275.7L723.1 291.7L744.4 280.9ZM715.7 281.2L700.1 289.1L700.1 305.1L715.7 297.2ZM713.9 280.3L698.3 288.2L698.3 304.2L713.9 296.3ZM686.6 295.9L667.5 305.6L667.5 321.6L686.6 311.9ZM684.9 295.0L665.7 304.7L665.7 320.7L684.9 311.0ZM663.5 202.6L669.1 205.5L669.1 232.2L663.5 229.3ZM677.4 209.8L685.8 214.1L685.8 240.8L677.4 236.5ZM712.3 227.7L726.2 234.8L726.2 261.5L712.3 254.4Z" fill="#ffffff" fill-opacity="0.04" stroke="#858585" stroke-width="0.6"/><path d="M650.0 202.8L667.1 211.6M607.6 224.3L624.8 233.1M565.6 245.5L582.8 254.3M686.7 221.7L703.9 230.5M644.3 243.1L661.5 251.9M602.4 264.3L619.5 273.1M723.9 240.8L741.1 249.6M681.6 262.2L698.7 271.0M639.6 283.4L656.7 292.2" stroke="#6e6e6e" stroke-width="1.5" stroke-linecap="round"/><ellipse cx="699.8" cy="171.7" rx="1.1" ry="0.7" fill="#333"/><ellipse cx="702.5" cy="178.8" rx="1.1" ry="0.7" fill="#333"/><ellipse cx="722.1" cy="183.1" rx="1.1" ry="0.7" fill="#333"/><ellipse cx="723.3" cy="191.0" rx="1.1" ry="0.7" fill="#333"/><ellipse cx="707.8" cy="196.0" rx="1.1" ry="0.7" fill="#333"/><ellipse cx="682.7" cy="183.2" rx="1.1" ry="0.7" fill="#333"/><ellipse cx="741.5" cy="199.6" rx="1.1" ry="0.7" fill="#333"/><ellipse cx="764.5" cy="211.4" rx="1.1" ry="0.7" fill="#333"/><ellipse cx="786.8" cy="222.8" rx="1.1" ry="0.7" fill="#333"/><ellipse cx="716.7" cy="212.1" rx="1.1" ry="0.7" fill="#333"/><ellipse cx="739.7" cy="223.9" rx="1.1" ry="0.7" fill="#333"/><ellipse cx="762.0" cy="235.4" rx="1.1" ry="0.7" fill="#333"/></svg>
</body></html>
